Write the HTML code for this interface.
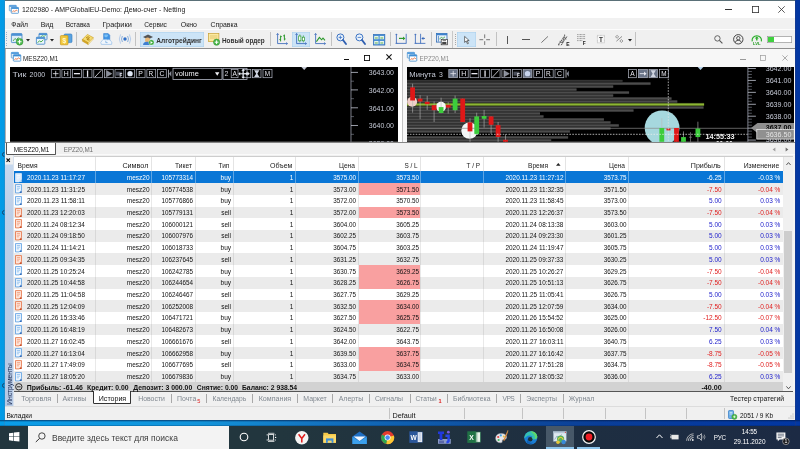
<!DOCTYPE html>
<html lang="ru"><head><meta charset="utf-8"><title>MetaTrader 5</title>
<style>
html,body{margin:0;padding:0}
body{width:800px;height:449px;overflow:hidden;position:relative;background:#fff;font-family:"Liberation Sans",sans-serif}
.a{position:absolute}
.t{position:absolute;white-space:nowrap;margin:0;padding:0}
svg{overflow:visible}
svg text{font-family:"Liberation Sans",sans-serif}
#root{position:absolute;left:-4px;top:-4px;width:808px;height:457px;overflow:hidden;filter:blur(0.35px);background:linear-gradient(90deg,#0a9de8 0%,#1294da 25%,#1478c4 37.5%,#1060b0 50%,#0e4c9c 62.5%,#0a3e98 75%,#0236a2 100%)}
#in{position:absolute;left:4px;top:4px;width:800px;height:449px}
</style></head><body><div id="root"><div id="in">
<div class="a" style="left:0px;top:0px;width:800px;height:449px;background:linear-gradient(90deg,#0a9de8 0%,#1294da 25%,#1478c4 37.5%,#1060b0 50%,#0e4c9c 62.5%,#0a3e98 75%,#0236a2 100%);"></div>
<div class="a" style="left:0px;top:0px;width:5px;height:426px;background:linear-gradient(90deg,#029ce8 0%,#049ae4 70%,#2a8cc8 100%);"></div>
<div class="a" style="left:795.4px;top:0px;width:4.6px;height:426px;background:linear-gradient(90deg,#1a3a88 0%,#0438a2 25%,#0236a2 100%);"></div>
<div class="a" style="left:5px;top:0.6px;width:790.4px;height:419.7px;background:#fff;"></div>
<div class="a" style="left:5px;top:0px;width:790.4px;height:0.8px;background:#5a7078;"></div>
<div class="a" style="left:0px;top:420.3px;width:800px;height:1.9px;background:linear-gradient(180deg,rgba(0,25,70,.7),rgba(0,25,70,0));"></div>
<svg class="a" style="left:9.2px;top:5.4px;" width="9.8" height="8.6" viewBox="0 0 9.8 8.6"><rect x="0.3" y="0.3" width="7" height="5.6" rx="0.6" fill="#e4f1fb" stroke="#3a86c8" stroke-width="0.6"/><rect x="0.3" y="0.3" width="7" height="1.5" fill="#4a98dc"/><rect x="2.3" y="2.4" width="7.2" height="5.9" rx="0.6" fill="#fff" stroke="#2f80c6" stroke-width="0.7"/><rect x="2.3" y="2.4" width="7.2" height="1.5" fill="#3d8fd6"/><path d="M3.3 6.9 L4.8 5.8 L5.8 6.5 L7.2 5.2 L8.5 5.9" fill="none" stroke="#e0602a" stroke-width="0.8"/></svg>
<div class="t" style="top:5.25px;height:9px;line-height:9px;font-size:6.93px;color:#1a1a1a;left:22px;">1202980 - AMPGlobalEU-Demo: Демо-счет - Netting</div>
<div class="a" style="left:724.5px;top:9.4px;width:7px;height:0.7px;background:#333;"></div>
<svg class="a" style="left:751.5px;top:5.6px;" width="7" height="7" viewBox="0 0 7 7"><rect x="0.4" y="0.4" width="6.2" height="6.2" fill="none" stroke="#333" stroke-width="0.8"/></svg>
<svg class="a" style="left:778.2px;top:5.6px;" width="7" height="7" viewBox="0 0 7 7"><path d="M0.3 0.3 L6.7 6.7 M6.7 0.3 L0.3 6.7" stroke="#333" stroke-width="0.8" fill="none"/></svg>
<div class="a" style="left:5px;top:17.8px;width:790.4px;height:12.2px;background:#f1f1f1;"></div>
<div class="t" style="top:20.25px;height:9px;line-height:9px;font-size:6.81px;color:#1a1a1a;left:11.25px;">Файл</div>
<div class="t" style="top:20.25px;height:9px;line-height:9px;font-size:6.91px;color:#1a1a1a;left:40.75px;">Вид</div>
<div class="t" style="top:20.25px;height:9px;line-height:9px;font-size:6.52px;color:#1a1a1a;left:65.75px;">Вставка</div>
<div class="t" style="top:19.25px;height:11px;line-height:11px;font-size:7.36px;color:#1a1a1a;left:102.5px;">Графики</div>
<div class="t" style="top:20.25px;height:9px;line-height:9px;font-size:6.64px;color:#1a1a1a;left:144.25px;">Сервис</div>
<div class="t" style="top:20.25px;height:9px;line-height:9px;font-size:6.99px;color:#1a1a1a;left:180.75px;">Окно</div>
<div class="t" style="top:20.25px;height:9px;line-height:9px;font-size:6.88px;color:#1a1a1a;left:210.5px;">Справка</div>
<div class="a" style="left:5px;top:29.6px;width:790.4px;height:18.6px;background:#f0f0f0;"></div>
<div class="a" style="left:5px;top:29.3px;width:790.4px;height:0.7px;background:#fcfcfc;"></div>
<div class="a" style="left:5px;top:48.1px;width:790.4px;height:1.1px;background:#8e8e8e;"></div>
<div class="a" style="left:76.1px;top:32.2px;width:0.8px;height:14px;background:#c2c2c2;"></div>
<div class="a" style="left:135.3px;top:32.2px;width:0.8px;height:14px;background:#c2c2c2;"></div>
<div class="a" style="left:270.1px;top:32.2px;width:0.8px;height:14px;background:#c2c2c2;"></div>
<div class="a" style="left:330.6px;top:32.2px;width:0.8px;height:14px;background:#c2c2c2;"></div>
<div class="a" style="left:390.1px;top:32.2px;width:0.8px;height:14px;background:#c2c2c2;"></div>
<div class="a" style="left:430.6px;top:32.2px;width:0.8px;height:14px;background:#c2c2c2;"></div>
<div class="a" style="left:495.9px;top:32.2px;width:0.8px;height:14px;background:#c2c2c2;"></div>
<div class="a" style="left:635.2px;top:32.2px;width:0.8px;height:14px;background:#c2c2c2;"></div>
<div class="a" style="left:452.2px;top:31px;width:0.6px;height:16.5px;background:#c8c8c8;"></div>
<div class="a" style="left:455px;top:33.5px;width:1px;height:0.9px;background:#a8a8a8;"></div>
<div class="a" style="left:455px;top:35.6px;width:1px;height:0.9px;background:#a8a8a8;"></div>
<div class="a" style="left:455px;top:37.7px;width:1px;height:0.9px;background:#a8a8a8;"></div>
<div class="a" style="left:455px;top:39.8px;width:1px;height:0.9px;background:#a8a8a8;"></div>
<div class="a" style="left:455px;top:41.9px;width:1px;height:0.9px;background:#a8a8a8;"></div>
<div class="a" style="left:455px;top:44px;width:1px;height:0.9px;background:#a8a8a8;"></div>
<div class="a" style="left:5.9px;top:32px;width:0.8px;height:0.9px;background:#9ab0cc;"></div>
<div class="a" style="left:5.9px;top:34.1px;width:0.8px;height:0.9px;background:#9ab0cc;"></div>
<div class="a" style="left:5.9px;top:36.2px;width:0.8px;height:0.9px;background:#9ab0cc;"></div>
<div class="a" style="left:5.9px;top:38.3px;width:0.8px;height:0.9px;background:#9ab0cc;"></div>
<div class="a" style="left:5.9px;top:40.4px;width:0.8px;height:0.9px;background:#9ab0cc;"></div>
<div class="a" style="left:5.9px;top:42.5px;width:0.8px;height:0.9px;background:#9ab0cc;"></div>
<div class="a" style="left:5.9px;top:44.6px;width:0.8px;height:0.9px;background:#9ab0cc;"></div>
<svg class="a" style="left:11.4px;top:33.2px;" width="12.4" height="12.4" viewBox="0 0 12.4 12.4"><rect x="0.4" y="0.6" width="10.6" height="9" rx="0.8" fill="#dcecf8" stroke="#3b82c4" stroke-width="0.8"/><rect x="0.4" y="0.6" width="10.6" height="2.2" fill="#4a90d4"/><path d="M2 8 L4 5.5 L5.5 6.8 L7.5 4.4" stroke="#3a9a3a" stroke-width="0.8" fill="none"/><circle cx="8.6" cy="8.8" r="3.4" fill="#4cb84c" stroke="#2a8a2a" stroke-width="0.5"/><path d="M8.6 6.8 V10.8 M6.6 8.8 H10.6" stroke="#fff" stroke-width="1.1"/></svg>
<svg class="a" style="left:26.2px;top:38.8px;" width="4" height="2.4" viewBox="0 0 4 2.4"><path d="M0 0 L4 0 L2 2.4 Z" fill="#222"/></svg>
<svg class="a" style="left:36px;top:33.4px;" width="11.6" height="12" viewBox="0 0 11.6 12"><rect x="3" y="0.4" width="8" height="6.4" rx="0.6" fill="#e4f0fa" stroke="#3b82c4" stroke-width="0.8"/><rect x="3" y="0.4" width="8" height="1.6" fill="#4a90d4"/><rect x="0.4" y="4.2" width="8.4" height="7" rx="0.6" fill="#eef6fc" stroke="#3b82c4" stroke-width="0.8"/><rect x="0.4" y="4.2" width="8.4" height="1.7" fill="#4a90d4"/><path d="M1.6 9.8 L3.4 7.8 L5 9 L7.4 6.8" stroke="#3aa63a" stroke-width="0.9" fill="none"/><path d="M4.6 4 L6.4 2.6 L8 3.4 L9.8 2.2" stroke="#3aa63a" stroke-width="0.7" fill="none"/></svg>
<svg class="a" style="left:50.2px;top:38.8px;" width="4" height="2.4" viewBox="0 0 4 2.4"><path d="M0 0 L4 0 L2 2.4 Z" fill="#222"/></svg>
<svg class="a" style="left:59.5px;top:33.3px;" width="12.4" height="12.2" viewBox="0 0 12.4 12.2"><rect x="4" y="1" width="8" height="8.6" rx="1.2" fill="#5aa2e0" stroke="#2f78c0" stroke-width="0.6"/><rect x="0.4" y="2.6" width="7.6" height="9.2" rx="0.8" fill="#f2c83a" stroke="#c8961a" stroke-width="0.7"/><text x="4.2" y="10" font-size="7" font-weight="bold" fill="#fff8d0" text-anchor="middle">$</text></svg>
<svg class="a" style="left:82px;top:33.6px;" width="11.6" height="11" viewBox="0 0 11.6 11"><path d="M0.4 5.4 L5.4 0.4 L11.2 3.6 L6.2 8.8 Z" fill="#f6dc70" stroke="#c89a1c" stroke-width="0.6"/><path d="M0.4 5.4 L6.2 8.8 L6.2 10.6 L0.4 7.2 Z" fill="#d8a820" stroke="#b88a14" stroke-width="0.4"/><path d="M6.2 8.8 L11.2 3.6 L11.2 5.2 L6.2 10.6 Z" fill="#fff0b0" stroke="#c89a1c" stroke-width="0.4"/><path d="M4.2 3.6 Q6.4 2 7.4 3.6 Q6.6 5.4 4.8 5 Q5.6 6.6 7.6 5.8" stroke="#a87808" stroke-width="0.9" fill="none"/></svg>
<svg class="a" style="left:100.2px;top:32.8px;" width="12.6" height="12" viewBox="0 0 12.6 12"><path d="M3.6 0.6 H8.2 L9.8 2.2 V8 H3.6 Z" fill="#3f93e4" stroke="#2a78cc" stroke-width="0.5"/><path d="M4.4 1.4 H7.6 L8.2 3 L6 4.6 L4.4 3.6 Z" fill="#7cc0f4"/><path d="M1.4 11.4 Q-0.2 9.2 2 7.8 Q2.6 5.8 4.8 6.6 Q6.2 5.6 7.4 6.8 Q9.6 5.8 10.4 7.8 Q12.8 8.6 11.6 11.4 Z" fill="#f0f6fc" stroke="#86b6e6" stroke-width="0.6"/><path d="M5.8 7.6 V9.6 H7.6" stroke="#6aa6e0" stroke-width="0.7" fill="none"/></svg>
<svg class="a" style="left:119px;top:33.4px;" width="12" height="12" viewBox="0 0 12 12"><circle cx="6" cy="6" r="1.7" fill="#3070c8"/><path d="M3.4 3 Q1.6 6 3.4 9 M8.6 3 Q10.4 6 8.6 9" stroke="#6f9fd8" stroke-width="0.8" fill="none"/><path d="M1.6 1.4 Q-1 6 1.6 10.6 M10.4 1.4 Q13 6 10.4 10.6" stroke="#a8c4e8" stroke-width="0.8" fill="none"/></svg>
<div class="a" style="left:139.6px;top:31.5px;width:64.8px;height:15.1px;background:#cce4f7;box-shadow:inset 0 0 0 0.5px #a8cdec;"></div>
<svg class="a" style="left:142px;top:33.4px;" width="12.4" height="12.2" viewBox="0 0 12.4 12.2"><path d="M1 4 L6 1.4 L11 4 L6 6.4 Z" fill="#555"/><circle cx="5.6" cy="7" r="2.6" fill="#e8b878"/><path d="M1 12 Q1.4 8.6 5.4 8.8 Q9.4 8.6 9.8 12 Z" fill="#3f7fd0"/><circle cx="9.4" cy="9.4" r="2.7" fill="#38a838" stroke="#fff" stroke-width="0.4"/><path d="M8.5 7.9 L10.9 9.4 L8.5 10.9 Z" fill="#fff"/></svg>
<div class="t" style="top:36.25px;height:9px;line-height:9px;font-size:6.61px;color:#333;font-weight:bold;left:156.3px;">Алготрейдинг</div>
<svg class="a" style="left:208px;top:32.8px;" width="12.4" height="12.6" viewBox="0 0 12.4 12.6"><rect x="0.5" y="0.6" width="10.4" height="8" fill="#fbe9a0" stroke="#c8a030" stroke-width="0.7"/><path d="M2 3 H9.4 M2 5 H9.4" stroke="#d4b050" stroke-width="0.6"/><circle cx="8.6" cy="9.2" r="3.1" fill="#4cb84c" stroke="#2a8a2a" stroke-width="0.5"/><path d="M8.6 7.4 V11 M6.8 9.2 H10.4" stroke="#fff" stroke-width="1"/></svg>
<div class="t" style="top:36.25px;height:9px;line-height:9px;font-size:6.39px;color:#333;font-weight:bold;left:222px;">Новый ордер</div>
<svg class="a" style="left:276px;top:33.4px;" width="12" height="12.2" viewBox="0 0 12 12.2"><path d="M1.6 0.6 V10.6 H11.4" stroke="#2f62b8" stroke-width="0.8" fill="none"/><path d="M0.4 2 L1.6 0.4 L2.8 2 M10 9.4 L11.6 10.6 L10 11.8" stroke="#2f62b8" stroke-width="0.6" fill="none"/><path d="M4.6 2.6 V8.4 M3.4 6.6 H4.6 M4.6 3.6 H5.8 M8.4 1.6 V7.4 M7.2 2.8 H8.4 M8.4 6 H9.6" stroke="#2c9a2c" stroke-width="1" fill="none"/></svg>
<div class="a" style="left:292.4px;top:31.5px;width:17.6px;height:15.1px;background:#cce4f7;box-shadow:inset 0 0 0 0.5px #a8cdec;"></div>
<svg class="a" style="left:295.4px;top:33.4px;" width="12" height="12.2" viewBox="0 0 12 12.2"><path d="M1.6 0.6 V10.6 H11.4" stroke="#2f62b8" stroke-width="0.8" fill="none"/><path d="M0.4 2 L1.6 0.4 L2.8 2 M10 9.4 L11.6 10.6 L10 11.8" stroke="#2f62b8" stroke-width="0.6" fill="none"/><path d="M4.8 1.4 V9.4 M8.4 2.4 V9.4" stroke="#2c9a2c" stroke-width="0.6"/><rect x="3.7" y="3" width="2.2" height="4.8" fill="#fff" stroke="#2c9a2c" stroke-width="0.7"/><rect x="7.3" y="4.2" width="2.2" height="3.6" fill="#fff" stroke="#2c9a2c" stroke-width="0.7"/></svg>
<svg class="a" style="left:313.6px;top:33.4px;" width="12" height="12.2" viewBox="0 0 12 12.2"><path d="M1.6 0.6 V10.6 H11.4" stroke="#2f62b8" stroke-width="0.8" fill="none"/><path d="M0.4 2 L1.6 0.4 L2.8 2 M10 9.4 L11.6 10.6 L10 11.8" stroke="#2f62b8" stroke-width="0.6" fill="none"/><path d="M2.4 8.6 L5.4 4.4 L7.6 6.8 L9 5.2 L11 7.4" stroke="#2c9a2c" stroke-width="1.1" fill="none"/></svg>
<svg class="a" style="left:336px;top:33.2px;" width="11" height="12" viewBox="0 0 11 12"><circle cx="4.4" cy="4.4" r="3.5" fill="#eaf2fb" stroke="#3c74c4" stroke-width="1"/><path d="M7 7 L10 11" stroke="#2f5fb0" stroke-width="1.8" stroke-linecap="round"/><path d="M2.6 4.4 H6.2 M4.4 2.6 V6.2" stroke="#3c74c4" stroke-width="0.8"/></svg>
<svg class="a" style="left:355px;top:33.2px;" width="11" height="12" viewBox="0 0 11 12"><circle cx="4.4" cy="4.4" r="3.5" fill="#eaf2fb" stroke="#3c74c4" stroke-width="1"/><path d="M7 7 L10 11" stroke="#2f5fb0" stroke-width="1.8" stroke-linecap="round"/><path d="M2.6 4.4 H6.2" stroke="#3c74c4" stroke-width="0.8"/></svg>
<svg class="a" style="left:373px;top:33.6px;" width="12.2" height="11.4" viewBox="0 0 12.2 11.4"><rect x="0.3" y="0.3" width="11.6" height="10.8" fill="#4a90d4" stroke="#2f6ab4" stroke-width="0.6"/><rect x="1.2" y="2" width="4.3" height="3.2" fill="#e8f4e8"/><rect x="6.7" y="2" width="4.3" height="3.2" fill="#e8f4e8"/><rect x="1.2" y="7" width="4.3" height="3.2" fill="#e8f4e8"/><rect x="6.7" y="7" width="4.3" height="3.2" fill="#e8f4e8"/><path d="M2 4 H4.8 M7.4 4 H10.2 M2 9 H4.8 M7.4 9 H10.2" stroke="#38a038" stroke-width="0.8"/></svg>
<svg class="a" style="left:395.4px;top:33.4px;" width="12.2" height="12.2" viewBox="0 0 12.2 12.2"><path d="M1.4 0.8 V10.4 H11.4" stroke="#2f62b8" stroke-width="0.8" fill="none"/><path d="M11.2 0.8 V10.4" stroke="#2f62b8" stroke-width="0.8"/><path d="M0.4 1.6 H2.4 M0.4 10.4 H2.4" stroke="#2f62b8" stroke-width="0.6"/><path d="M4 5.4 H8.4" stroke="#2c9a2c" stroke-width="1.2"/><path d="M8 3.6 L10.4 5.4 L8 7.2 Z" fill="#2c9a2c"/></svg>
<svg class="a" style="left:413.6px;top:33.4px;" width="12.4" height="12.2" viewBox="0 0 12.4 12.2"><path d="M1.4 0.8 V10.4 H11.4" stroke="#2f62b8" stroke-width="0.8" fill="none"/><path d="M6.6 0.8 V10.4" stroke="#2f62b8" stroke-width="0.8"/><path d="M0.4 1.6 H2.4 M0.4 10.4 H2.4" stroke="#2f62b8" stroke-width="0.6"/><path d="M11 5.4 H9" stroke="#2f62b8" stroke-width="0.9"/><path d="M9.4 3.8 L7.4 5.4 L9.4 7 Z" fill="#2f62b8"/></svg>
<svg class="a" style="left:436px;top:33.2px;" width="12" height="12.4" viewBox="0 0 12 12.4"><rect x="0.4" y="0.5" width="10.6" height="8.6" fill="#e8f2fb" stroke="#2f6ab4" stroke-width="0.8"/><rect x="0.4" y="0.5" width="10.6" height="1.8" fill="#3d82cc"/><path d="M2.4 3 V8.6" stroke="#2f6ab4" stroke-width="0.7"/><path d="M3.4 6 L5.4 4.4 L7 5.4 L9 3.8" stroke="#38a038" stroke-width="0.8" fill="none"/><rect x="5.2" y="6.4" width="6.2" height="5.4" fill="#fff" stroke="#333" stroke-width="0.7"/><rect x="6.2" y="9" width="4.2" height="2.2" fill="#444"/><rect x="6.6" y="6.8" width="3.4" height="1.4" fill="#888"/></svg>
<div class="a" style="left:457.4px;top:31.5px;width:18.4px;height:15.1px;background:#cce4f7;box-shadow:inset 0 0 0 0.5px #a8cdec;"></div>
<svg class="a" style="left:463.6px;top:35.6px;" width="6" height="8.4" viewBox="0 0 6 8.4"><path d="M0.6 0.4 L0.6 6.4 L2.2 5 L3.4 7.8 L4.4 7.4 L3.2 4.6 L5.2 4.6 Z" fill="#fff" stroke="#222" stroke-width="0.6"/></svg>
<svg class="a" style="left:479.4px;top:33.8px;" width="11.4" height="11.4" viewBox="0 0 11.4 11.4"><path d="M5.7 0.4 V4.2 M5.7 7.2 V11 M0.4 5.7 H4.2 M7.2 5.7 H11" stroke="#555" stroke-width="0.8"/></svg>
<div class="a" style="left:507px;top:35.6px;width:0.7px;height:8px;background:#555;"></div>
<div class="a" style="left:522px;top:39.3px;width:7.6px;height:0.7px;background:#555;"></div>
<svg class="a" style="left:541px;top:36.2px;" width="7.4" height="7" viewBox="0 0 7.4 7"><path d="M0.4 6.6 L7 0.4" stroke="#555" stroke-width="0.8"/></svg>
<svg class="a" style="left:558px;top:33.6px;" width="12" height="12" viewBox="0 0 12 12"><path d="M0.6 10.8 L6.6 1.6 M3.2 11.2 L9.2 2" stroke="#3a3a3a" stroke-width="0.9" stroke-dasharray="1.5 0.6"/><path d="M1.6 7.4 L4.4 8.8 L6.2 3.4 L8.4 5" stroke="#3a3a3a" stroke-width="0.7" fill="none"/><path d="M6.6 0.4 V2.6 M0.8 9.4 V11.6" stroke="#3a3a3a" stroke-width="0.6"/><text x="9.8" y="11.6" font-size="5" font-weight="bold" fill="#111" text-anchor="middle">E</text></svg>
<svg class="a" style="left:577.4px;top:34.2px;" width="9.4" height="11.4" viewBox="0 0 9.4 11.4"><path d="M0.2 0.6 H8.4 M0.2 2.6 H8.4 M0.2 4.6 H8.4 M0.2 6.6 H5.4" stroke="#666" stroke-width="0.7" stroke-dasharray="0.9 0.5"/><text x="7.2" y="11" font-size="4.8" font-weight="bold" fill="#222" text-anchor="middle">F</text></svg>
<svg class="a" style="left:597px;top:35.4px;" width="8" height="8.4" viewBox="0 0 8 8.4"><rect x="0.4" y="0.4" width="7" height="7.4" fill="#f8f8f8" stroke="#888" stroke-width="0.5" stroke-dasharray="0.8 0.5"/><text x="3.9" y="6.6" font-size="6.4" font-weight="bold" fill="#333" text-anchor="middle" font-family="Liberation Serif,serif">T</text></svg>
<svg class="a" style="left:615px;top:35px;" width="9" height="8" viewBox="0 0 9 8"><path d="M0.5 1.8 L2.1 0.4 L3.7 1.8 L2.1 3.2 Z" fill="none" stroke="#666" stroke-width="0.6"/><path d="M1.4 6.2 L7 1.4" stroke="#666" stroke-width="0.7"/><path d="M4.8 6 L6.4 4.6 L8 6 L6.4 7.4 Z" fill="none" stroke="#666" stroke-width="0.6"/></svg>
<svg class="a" style="left:628.3px;top:39.4px;" width="4" height="2.4" viewBox="0 0 4 2.4"><path d="M0 0 L4 0 L2 2.4 Z" fill="#222"/></svg>
<svg class="a" style="left:714.4px;top:35.2px;" width="9" height="9" viewBox="0 0 9 9"><circle cx="3.4" cy="3.4" r="2.7" fill="none" stroke="#555" stroke-width="0.9"/><path d="M5.4 5.4 L8.4 8.4" stroke="#555" stroke-width="1.1"/></svg>
<svg class="a" style="left:732.8px;top:34.2px;" width="10.6" height="10.6" viewBox="0 0 10.6 10.6"><circle cx="5.3" cy="5.3" r="4.7" fill="none" stroke="#333" stroke-width="0.9"/><circle cx="5.3" cy="4.2" r="1.7" fill="none" stroke="#333" stroke-width="0.8"/><path d="M2.2 8.6 Q2.6 6.2 5.3 6.3 Q8 6.2 8.4 8.6" fill="none" stroke="#333" stroke-width="0.8"/></svg>
<svg class="a" style="left:751px;top:33.6px;" width="11.6" height="11.6" viewBox="0 0 11.6 11.6"><path d="M1.2 7.4 A4.7 4.7 0 1 1 10.4 7.4" fill="none" stroke="#2cae2c" stroke-width="1.2"/><path d="M5.8 2.2 L7.8 4.6 L6.5 4.6 L6.5 6.6 L5.1 6.6 L5.1 4.6 L3.8 4.6 Z" fill="#2cae2c"/><text x="5.8" y="11.2" font-size="4.2" font-weight="bold" fill="#1f9a1f" text-anchor="middle">LVL</text></svg>
<div class="a" style="left:767px;top:36.4px;width:25px;height:7px;background:#fff;box-shadow:inset 0 0 0 0.7px #9a9a9a;"></div>
<div class="a" style="left:768px;top:37.4px;width:6px;height:5px;background:#3fd13f;"></div>
<div class="a" style="left:5px;top:49.2px;width:397.4px;height:92.8px;background:#fff;"></div>
<div class="a" style="left:402.4px;top:49.2px;width:393px;height:92.8px;background:#f7f7f7;"></div>
<div class="a" style="left:402.3px;top:49.2px;width:0.8px;height:92.8px;background:#c4c4c4;"></div>
<div class="a" style="left:5px;top:49.2px;width:1.3px;height:92.8px;background:#b2b2b2;"></div>
<div class="a" style="left:5px;top:141.6px;width:790.4px;height:0.8px;background:#fff;"></div>
<div class="a" style="left:5px;top:142.3px;width:790.4px;height:1.1px;background:#858585;"></div>
<svg class="a" style="left:11px;top:52.4px;" width="10.2" height="9.6" viewBox="0 0 9.6 9"><rect x="0.3" y="0.3" width="6.8" height="5.4" rx="0.6" fill="#e4f1fb" stroke="#3a86c8" stroke-width="0.6"/><rect x="0.3" y="0.3" width="6.8" height="1.5" fill="#4a98dc"/><rect x="2.2" y="2.6" width="7" height="6" rx="0.6" fill="#fff" stroke="#2f80c6" stroke-width="0.7"/><rect x="2.2" y="2.6" width="7" height="1.5" fill="#3d8fd6"/><path d="M3.2 7.2 L4.6 6.2 L5.6 6.9 L7 5.6 L8.3 6.3" fill="none" stroke="#e0602a" stroke-width="0.8"/></svg>
<div class="t" style="top:54.25px;height:9px;line-height:9px;font-size:6.34px;color:#1a1a1a;left:23px;">MESZ20,M1</div>
<svg class="a" style="left:407.4px;top:52.4px;" width="10.2" height="9.6" viewBox="0 0 9.6 9"><rect x="0.3" y="0.3" width="6.8" height="5.4" rx="0.6" fill="#e4f1fb" stroke="#3a86c8" stroke-width="0.6"/><rect x="0.3" y="0.3" width="6.8" height="1.5" fill="#4a98dc"/><rect x="2.2" y="2.6" width="7" height="6" rx="0.6" fill="#fff" stroke="#2f80c6" stroke-width="0.7"/><rect x="2.2" y="2.6" width="7" height="1.5" fill="#3d8fd6"/><path d="M3.2 7.2 L4.6 6.2 L5.6 6.9 L7 5.6 L8.3 6.3" fill="none" stroke="#e0602a" stroke-width="0.8"/></svg>
<div class="t" style="top:54.25px;height:9px;line-height:9px;font-size:6.3px;color:#8a8a8a;left:419.5px;">EPZ20,M1</div>
<div class="a" style="left:343.6px;top:59.2px;width:5.4px;height:1px;background:#111;"></div>
<svg class="a" style="left:364.2px;top:54.6px;" width="6" height="6" viewBox="0 0 6 6"><rect x="0.45" y="0.45" width="5.1" height="5.1" fill="none" stroke="#111" stroke-width="0.9"/></svg>
<svg class="a" style="left:385.6px;top:54.4px;" width="6" height="6" viewBox="0 0 6 6"><path d="M0.4 0.4 L5.6 5.6 M5.6 0.4 L0.4 5.6" stroke="#111" stroke-width="1.1"/></svg>
<div class="a" style="left:740px;top:59.4px;width:5.6px;height:0.7px;background:#9a9a9a;"></div>
<svg class="a" style="left:760.4px;top:54.8px;" width="6" height="6" viewBox="0 0 6 6"><rect x="0.4" y="0.4" width="5.2" height="5.2" fill="none" stroke="#9a9a9a" stroke-width="0.7"/></svg>
<svg class="a" style="left:782px;top:54.6px;" width="6" height="6" viewBox="0 0 6 6"><path d="M0.4 0.4 L5.6 5.6 M5.6 0.4 L0.4 5.6" stroke="#9a9a9a" stroke-width="0.8"/></svg>
<svg class="a" style="left:10px;top:66.8px;overflow:hidden" width="388" height="74.8" viewBox="0 0 388 74.8"><rect x="0" y="0" width="388" height="74.8" fill="#000"/><text x="2.5" y="9.7" font-size="6.9" fill="#c4c8d4" textLength="14" lengthAdjust="spacingAndGlyphs">Тик</text><text x="19.6" y="9.7" font-size="6.9" fill="#c4c8d4" textLength="15.6" lengthAdjust="spacingAndGlyphs">2000</text><rect x="41.3" y="2.6" width="8.8" height="8.1" fill="none" stroke="#b4b8c6" stroke-width="0.7"/><path d="M42.9 6.65 H48.5 M45.7 3.85 V9.45" stroke="#e8e8f0" stroke-width="0.8"/><rect x="51.92" y="2.6" width="8.8" height="8.1" fill="none" stroke="#b4b8c6" stroke-width="0.7"/><text x="56.32" y="9.18" font-size="6.9" fill="#e8e8f0" text-anchor="middle">H</text><rect x="62.54" y="2.6" width="8.8" height="8.1" fill="none" stroke="#b4b8c6" stroke-width="0.7"/><path d="M63.94 6.65 H69.94" stroke="#e8e8f0" stroke-width="1.3"/><rect x="73.16" y="2.6" width="8.8" height="8.1" fill="none" stroke="#b4b8c6" stroke-width="0.7"/><path d="M77.56 3.45 V9.85" stroke="#e8e8f0" stroke-width="1.3"/><rect x="83.78" y="2.6" width="8.8" height="8.1" fill="none" stroke="#b4b8c6" stroke-width="0.7"/><path d="M84.98 10.05 L91.38 3.25" stroke="#e8e8f0" stroke-width="0.8"/><rect x="94.4" y="2.6" width="8.8" height="8.1" fill="none" stroke="#b4b8c6" stroke-width="0.7"/><path d="M96.4 3.45 V9.85 L101.8 6.65 Z" fill="#8a8f9c" stroke="#c8c8d0" stroke-width="0.4"/><rect x="105.02" y="2.6" width="8.8" height="8.1" fill="none" stroke="#b4b8c6" stroke-width="0.7"/><rect x="106.02" y="4.65" width="5.8" height="4" fill="#4a4e5a"/><text x="111.02" y="10.05" font-size="4.6" font-weight="bold" fill="#e8e8f0" text-anchor="middle">F</text><rect x="115.64" y="2.6" width="8.8" height="8.1" fill="none" stroke="#b4b8c6" stroke-width="0.7"/><circle cx="120.04" cy="6.65" r="2.7" fill="#dfe6f4"/><rect x="126.26" y="2.6" width="8.8" height="8.1" fill="none" stroke="#b4b8c6" stroke-width="0.7"/><text x="130.66" y="9.18" font-size="6.9" fill="#e8e8f0" text-anchor="middle">P</text><rect x="136.88" y="2.6" width="8.8" height="8.1" fill="none" stroke="#b4b8c6" stroke-width="0.7"/><text x="140.88" y="9" font-size="6.4" fill="#e8e8f0" text-anchor="middle">R</text><path d="M141.88 7.85 l1.6 1.8" stroke="#e8e8f0" stroke-width="0.5"/><rect x="147.5" y="2.6" width="8.8" height="8.1" fill="none" stroke="#b4b8c6" stroke-width="0.7"/><text x="151.9" y="9.18" font-size="6.9" fill="#e8e8f0" text-anchor="middle">C</text><path d="M158.52 2.65 V10.65" stroke="#d0d0d8" stroke-width="0.8"/><path d="M161.32 3.65 L159.02 6.65 L161.32 9.65 Z" fill="#8a8f9c"/><rect x="163" y="1.3" width="49" height="11.2" fill="#000" stroke="#b4b8c6" stroke-width="0.8"/><text x="165" y="9.4" font-size="7.4" fill="#f0f0f4">volume</text><path d="M205 5.2 h4.4 l-2.2 3.6 Z" fill="#f0f0f4"/><rect x="213" y="1.3" width="24" height="11.2" fill="none" stroke="#b4b8c6" stroke-width="0.8"/><text x="214.6" y="9.4" font-size="7" fill="#d8d8e0">2</text><rect x="221.2" y="2.6" width="6.8" height="8.1" fill="none" stroke="#b4b8c6" stroke-width="0.7"/><text x="224.6" y="9.08" font-size="6.6" fill="#e8e8f0" text-anchor="middle">A</text><rect x="233" y="2.6" width="7.8" height="8.1" fill="none" stroke="#b4b8c6" stroke-width="0.7"/><path d="M234.2 6.65 H238.2" stroke="#e8e8f0" stroke-width="0.9"/><path d="M237.4 4.45 L239.8 6.65 L237.4 8.85 Z" fill="#e8e8f0"/><rect x="242.5" y="2.6" width="8.5" height="8.1" fill="none" stroke="#b4b8c6" stroke-width="0.7"/><path d="M244.1 3.25 H249.4 L247.35 6.65 L249.4 10.05 H244.1 L246.15 6.65 Z" fill="#cfd4e0"/><rect x="253" y="2.6" width="9" height="8.1" fill="none" stroke="#b4b8c6" stroke-width="0.7"/><text x="257.5" y="9" font-size="6.4" fill="#e8e8f0" text-anchor="middle">M</text><path d="M233.2 3 v7.6 M229.4 6.8 h7.6" stroke="#e8ecf4" stroke-width="1"/><path d="M233.2 1.8 l1.8 2 h-3.6 Z M233.2 11.8 l1.8 -2 h-3.6 Z M228.2 6.8 l2 -1.8 v3.6 Z M238.2 6.8 l-2 -1.8 v3.6 Z" fill="#e8ecf4"/><path d="M291.4 0 h5.6 l-2.8 3 Z" fill="#c8ccd8"/><path d="M341 0 V74.8" stroke="#9a9eac" stroke-width="0.8"/><path d="M341 5.4 h7" stroke="#c0c4d0" stroke-width="0.8"/><path d="M341 14.2 h3" stroke="#8a8e9c" stroke-width="0.6"/><text x="358.8" y="8.28" font-size="8" fill="#c4c8d4" textLength="25.2" lengthAdjust="spacingAndGlyphs">3643.00</text><path d="M341 22.9 h7" stroke="#c0c4d0" stroke-width="0.8"/><path d="M341 31.7 h3" stroke="#8a8e9c" stroke-width="0.6"/><text x="358.8" y="25.78" font-size="8" fill="#c4c8d4" textLength="25.2" lengthAdjust="spacingAndGlyphs">3642.00</text><path d="M341 40.8 h7" stroke="#c0c4d0" stroke-width="0.8"/><path d="M341 49.6 h3" stroke="#8a8e9c" stroke-width="0.6"/><text x="358.8" y="43.68" font-size="8" fill="#c4c8d4" textLength="25.2" lengthAdjust="spacingAndGlyphs">3641.00</text><path d="M341 58.5 h7" stroke="#c0c4d0" stroke-width="0.8"/><path d="M341 67.3 h3" stroke="#8a8e9c" stroke-width="0.6"/><text x="358.8" y="61.38" font-size="8" fill="#c4c8d4" textLength="25.2" lengthAdjust="spacingAndGlyphs">3640.00</text><path d="M341 76 h7" stroke="#c0c4d0" stroke-width="0.8"/><text x="358.8" y="78.88" font-size="8" fill="#c4c8d4" textLength="25.2" lengthAdjust="spacingAndGlyphs">3639.00</text></svg>
<svg class="a" style="left:406.5px;top:66.8px;overflow:hidden" width="387.9" height="74.8" viewBox="0 0 387.9 74.8"><rect x="0" y="0" width="387.9" height="74.8" fill="#000"/><rect x="0" y="12.11" width="215.5" height="2.99" fill="#1c1c1c"/><rect x="0" y="15.09" width="243.5" height="2.99" fill="#1c1c1c"/><rect x="0" y="18.09" width="206.2" height="2.99" fill="#1c1c1c"/><rect x="0" y="21.08" width="169.5" height="2.99" fill="#1c1c1c"/><rect x="0" y="24.07" width="222.1" height="2.99" fill="#1c1c1c"/><rect x="0" y="27.06" width="206.2" height="2.99" fill="#1c1c1c"/><rect x="0" y="30.05" width="264.5" height="2.99" fill="#1c1c1c"/><rect x="0" y="33.04" width="270.3" height="2.99" fill="#1c1c1c"/><rect x="0" y="39.02" width="296.5" height="2.99" fill="#1c1c1c"/><rect x="0" y="42.01" width="226.5" height="2.99" fill="#1c1c1c"/><rect x="0" y="45" width="133" height="2.99" fill="#1c1c1c"/><rect x="0" y="47.98" width="136.5" height="2.99" fill="#1c1c1c"/><rect x="0" y="50.98" width="196.9" height="2.99" fill="#1c1c1c"/><rect x="0" y="53.97" width="203.5" height="2.99" fill="#1c1c1c"/><rect x="0" y="56.95" width="211.8" height="2.99" fill="#1c1c1c"/><rect x="0" y="59.95" width="203.5" height="2.99" fill="#1c1c1c"/><rect x="0" y="62.94" width="162.9" height="2.99" fill="#1c1c1c"/><rect x="0" y="68.92" width="161.1" height="2.99" fill="#1c1c1c"/><rect x="0" y="71.91" width="144.2" height="2.99" fill="#1c1c1c"/><rect x="0" y="12.55" width="215.5" height="2.1" fill="#343434"/><rect x="0" y="15.54" width="243.5" height="2.1" fill="#4c4c4c"/><rect x="0" y="18.53" width="206.2" height="2.1" fill="#4c4c4c"/><rect x="0" y="21.52" width="169.5" height="2.1" fill="#4c4c4c"/><rect x="0" y="24.51" width="222.1" height="2.1" fill="#4c4c4c"/><rect x="0" y="27.5" width="206.2" height="2.1" fill="#4c4c4c"/><rect x="0" y="30.49" width="264.5" height="2.1" fill="#4c4c4c"/><rect x="0" y="33.48" width="270.3" height="2.1" fill="#4c4c4c"/><rect x="0" y="39.46" width="296.5" height="2.1" fill="#4c4c4c"/><rect x="0" y="42.45" width="226.5" height="2.1" fill="#4c4c4c"/><rect x="0" y="45.44" width="133" height="2.1" fill="#4c4c4c"/><rect x="0" y="48.43" width="136.5" height="2.1" fill="#4c4c4c"/><rect x="0" y="51.42" width="196.9" height="2.1" fill="#4c4c4c"/><rect x="0" y="54.41" width="203.5" height="2.1" fill="#4c4c4c"/><rect x="0" y="57.4" width="211.8" height="2.1" fill="#4c4c4c"/><rect x="0" y="60.39" width="203.5" height="2.1" fill="#4c4c4c"/><rect x="0" y="63.38" width="162.9" height="2.1" fill="#4c4c4c"/><rect x="0" y="69.36" width="161.1" height="2.1" fill="#4c4c4c"/><rect x="0" y="72.35" width="144.2" height="2.1" fill="#4c4c4c"/><rect x="0" y="35.92" width="297.1" height="3.2" fill="#3c4a18"/><rect x="0" y="36.52" width="297.1" height="1.9" fill="#8cb634"/><circle cx="255.1" cy="60.8" r="17.4" fill="#a6d8de"/><circle cx="62.5" cy="63.6" r="8.2" fill="#f4f8f8"/><circle cx="34" cy="39.8" r="5" fill="#f6f8f6"/><circle cx="5.1" cy="34.8" r="5" fill="#f0cfc8"/><path d="M0 61.3 H340.9" stroke="#8a8a8a" stroke-width="0.7"/><path d="M5.6 16.7 V45.7" stroke="#b8b8b8" stroke-width="0.6"/><rect x="3.2" y="20.4" width="4.8" height="13.1" fill="#e01818"/><path d="M13.1 28.2 V52.2" stroke="#b8b8b8" stroke-width="0.6"/><rect x="10.7" y="31.6" width="4.8" height="2.9" fill="#e01818"/><path d="M20.2 28.8 V42.9" stroke="#b8b8b8" stroke-width="0.6"/><rect x="17.8" y="34.8" width="4.8" height="2.4" fill="#e01818"/><path d="M27.1 34.5 V55" stroke="#b8b8b8" stroke-width="0.6"/><rect x="24.7" y="38.2" width="4.8" height="5" fill="#e01818"/><path d="M34.1 30.7 V46.2" stroke="#b8b8b8" stroke-width="0.6"/><rect x="31.7" y="40.1" width="4.8" height="5.9" fill="#3ccc3c"/><path d="M41.2 35.2 V46.6" stroke="#b8b8b8" stroke-width="0.6"/><rect x="38.8" y="37.8" width="4.8" height="2.8" fill="#e01818"/><path d="M48.1 28.5 V46" stroke="#b8b8b8" stroke-width="0.6"/><rect x="45.7" y="31.6" width="4.8" height="11.6" fill="#3ccc3c"/><path d="M55.7 31.6 V55" stroke="#b8b8b8" stroke-width="0.6"/><rect x="53.3" y="31.6" width="4.8" height="23.4" fill="#e01818"/><path d="M63 51.2 V74.8" stroke="#b8b8b8" stroke-width="0.6"/><rect x="60.6" y="55.4" width="4.8" height="9" fill="#e01818"/><path d="M69.7 45.7 V67.2" stroke="#b8b8b8" stroke-width="0.6"/><rect x="67.3" y="49.4" width="4.8" height="17.8" fill="#3ccc3c"/><path d="M77.1 42.9 V60.6" stroke="#b8b8b8" stroke-width="0.6"/><rect x="74.7" y="49" width="4.8" height="2.8" fill="#3ccc3c"/><path d="M84.1 49.2 V67.2" stroke="#b8b8b8" stroke-width="0.6"/><rect x="81.7" y="49.4" width="4.8" height="8.4" fill="#e01818"/><path d="M91.1 55 V74.8" stroke="#b8b8b8" stroke-width="0.6"/><rect x="88.7" y="58.2" width="4.8" height="11.8" fill="#e01818"/><path d="M98.5 67.2 V74.8" stroke="#b8b8b8" stroke-width="0.6"/><rect x="96.1" y="72.8" width="4.8" height="2" fill="#e01818"/><path d="M254.8 51.2 V74.8" stroke="#b8b8b8" stroke-width="0.6"/><rect x="252.4" y="61" width="4.8" height="13.8" fill="#3ccc3c"/><path d="M269.5 61 V74.8" stroke="#b8b8b8" stroke-width="0.6"/><rect x="267.1" y="61" width="4.8" height="13.8" fill="#e01818"/><path d="M276.5 64.4 V74.8" stroke="#b8b8b8" stroke-width="0.6"/><rect x="274.1" y="70.1" width="4.8" height="4.7" fill="#3ccc3c"/><path d="M290.9 54.7 V74.8" stroke="#b8b8b8" stroke-width="0.6"/><rect x="288.5" y="61.6" width="4.8" height="8.5" fill="#3ccc3c"/><rect x="259.5" y="61.6" width="4" height="1.8" fill="#e01818"/><path d="M283.5 65.2 V74.8 M282 70.2 h3" stroke="#a0a0a0" stroke-width="0.6"/><path d="M0 67.3 H340.9" stroke="#f0f0f0" stroke-width="0.7" stroke-dasharray="1.6 1.3"/><path d="M261.3 0 V74.8" stroke="#e4e4e4" stroke-width="0.7" stroke-dasharray="1.6 1.3"/><rect x="0" y="0" width="220.5" height="12.8" fill="#000"/><text x="2.3" y="9.9" font-size="6.9" fill="#c4c8d4" textLength="26.4" lengthAdjust="spacingAndGlyphs">Минута</text><text x="32.1" y="9.9" font-size="6.9" fill="#c4c8d4">3</text><rect x="41.8" y="2.6" width="8.8" height="8.1" fill="#6a7488" stroke="#b4b8c6" stroke-width="0.7"/><path d="M43.4 6.65 H49 M46.2 3.85 V9.45" stroke="#e8e8f0" stroke-width="0.8"/><rect x="52.42" y="2.6" width="8.8" height="8.1" fill="none" stroke="#b4b8c6" stroke-width="0.7"/><text x="56.82" y="9.18" font-size="6.9" fill="#e8e8f0" text-anchor="middle">H</text><rect x="63.04" y="2.6" width="8.8" height="8.1" fill="none" stroke="#b4b8c6" stroke-width="0.7"/><path d="M64.44 6.65 H70.44" stroke="#e8e8f0" stroke-width="1.3"/><rect x="73.66" y="2.6" width="8.8" height="8.1" fill="none" stroke="#b4b8c6" stroke-width="0.7"/><path d="M78.06 3.45 V9.85" stroke="#e8e8f0" stroke-width="1.3"/><rect x="84.28" y="2.6" width="8.8" height="8.1" fill="none" stroke="#b4b8c6" stroke-width="0.7"/><path d="M85.48 10.05 L91.88 3.25" stroke="#e8e8f0" stroke-width="0.8"/><rect x="94.9" y="2.6" width="8.8" height="8.1" fill="none" stroke="#b4b8c6" stroke-width="0.7"/><path d="M96.9 3.45 V9.85 L102.3 6.65 Z" fill="#8a8f9c" stroke="#c8c8d0" stroke-width="0.4"/><rect x="105.52" y="2.6" width="8.8" height="8.1" fill="none" stroke="#b4b8c6" stroke-width="0.7"/><rect x="106.52" y="4.65" width="5.8" height="4" fill="#4a4e5a"/><text x="111.52" y="10.05" font-size="4.6" font-weight="bold" fill="#e8e8f0" text-anchor="middle">F</text><rect x="116.14" y="2.6" width="8.8" height="8.1" fill="#6a7488" stroke="#b4b8c6" stroke-width="0.7"/><circle cx="120.54" cy="6.65" r="2.7" fill="#c8d4ec"/><rect x="126.76" y="2.6" width="8.8" height="8.1" fill="none" stroke="#b4b8c6" stroke-width="0.7"/><text x="131.16" y="9.18" font-size="6.9" fill="#e8e8f0" text-anchor="middle">P</text><rect x="137.38" y="2.6" width="8.8" height="8.1" fill="none" stroke="#b4b8c6" stroke-width="0.7"/><text x="141.38" y="9" font-size="6.4" fill="#e8e8f0" text-anchor="middle">R</text><path d="M142.38 7.85 l1.6 1.8" stroke="#e8e8f0" stroke-width="0.5"/><rect x="148" y="2.6" width="8.8" height="8.1" fill="none" stroke="#b4b8c6" stroke-width="0.7"/><text x="152.4" y="9.18" font-size="6.9" fill="#e8e8f0" text-anchor="middle">C</text><path d="M159.02 2.65 V10.65" stroke="#d0d0d8" stroke-width="0.8"/><path d="M161.82 3.65 L159.52 6.65 L161.82 9.65 Z" fill="#8a8f9c"/><rect x="221.5" y="2.6" width="8" height="8.1" fill="none" stroke="#b4b8c6" stroke-width="0.7"/><text x="225.5" y="9.08" font-size="6.6" fill="#e8e8f0" text-anchor="middle">A</text><rect x="231.5" y="2.6" width="9" height="8.1" fill="#6a7488" stroke="#b4b8c6" stroke-width="0.7"/><path d="M232.7 6.65 H237.9" stroke="#e8e8f0" stroke-width="0.9"/><path d="M237.1 4.45 L239.5 6.65 L237.1 8.85 Z" fill="#e8e8f0"/><rect x="242" y="2.6" width="8.5" height="8.1" fill="#6a7488" stroke="#b4b8c6" stroke-width="0.7"/><path d="M243.6 3.25 H248.9 L246.85 6.65 L248.9 10.05 H243.6 L245.65 6.65 Z" fill="#cfd4e0"/><rect x="252.5" y="2.6" width="9" height="8.1" fill="none" stroke="#b4b8c6" stroke-width="0.7"/><text x="257" y="9" font-size="6.4" fill="#e8e8f0" text-anchor="middle">M</text><path d="M290.7 0 h5.6 l-2.8 3 Z" fill="#b8d4ec"/><path d="M340.9 0 V74.8" stroke="#9a9eac" stroke-width="0.8"/><path d="M340.9 1.5 h8" stroke="#c0c4d0" stroke-width="0.8"/><path d="M340.9 4.48 h4" stroke="#8a8e9c" stroke-width="0.6"/><path d="M340.9 7.46 h4" stroke="#8a8e9c" stroke-width="0.6"/><path d="M340.9 10.44 h4" stroke="#8a8e9c" stroke-width="0.6"/><text x="358.7" y="3.88" font-size="8" fill="#c4c8d4" textLength="25.8" lengthAdjust="spacingAndGlyphs">3642.00</text><path d="M340.9 13.43 h8" stroke="#c0c4d0" stroke-width="0.8"/><path d="M340.9 16.41 h4" stroke="#8a8e9c" stroke-width="0.6"/><path d="M340.9 19.39 h4" stroke="#8a8e9c" stroke-width="0.6"/><path d="M340.9 22.37 h4" stroke="#8a8e9c" stroke-width="0.6"/><text x="358.7" y="15.81" font-size="8" fill="#c4c8d4" textLength="25.8" lengthAdjust="spacingAndGlyphs">3641.00</text><path d="M340.9 25.36 h8" stroke="#c0c4d0" stroke-width="0.8"/><path d="M340.9 28.34 h4" stroke="#8a8e9c" stroke-width="0.6"/><path d="M340.9 31.32 h4" stroke="#8a8e9c" stroke-width="0.6"/><path d="M340.9 34.3 h4" stroke="#8a8e9c" stroke-width="0.6"/><text x="358.7" y="27.74" font-size="8" fill="#c4c8d4" textLength="25.8" lengthAdjust="spacingAndGlyphs">3640.00</text><path d="M340.9 37.29 h8" stroke="#c0c4d0" stroke-width="0.8"/><path d="M340.9 40.27 h4" stroke="#8a8e9c" stroke-width="0.6"/><path d="M340.9 43.25 h4" stroke="#8a8e9c" stroke-width="0.6"/><path d="M340.9 46.23 h4" stroke="#8a8e9c" stroke-width="0.6"/><text x="358.7" y="39.67" font-size="8" fill="#c4c8d4" textLength="25.8" lengthAdjust="spacingAndGlyphs">3639.00</text><path d="M340.9 49.22 h8" stroke="#c0c4d0" stroke-width="0.8"/><path d="M340.9 52.2 h4" stroke="#8a8e9c" stroke-width="0.6"/><path d="M340.9 55.18 h4" stroke="#8a8e9c" stroke-width="0.6"/><path d="M340.9 58.16 h4" stroke="#8a8e9c" stroke-width="0.6"/><text x="358.7" y="51.6" font-size="8" fill="#c4c8d4" textLength="25.8" lengthAdjust="spacingAndGlyphs">3638.00</text><path d="M340.9 61.15 h8" stroke="#c0c4d0" stroke-width="0.8"/><path d="M340.9 64.13 h4" stroke="#8a8e9c" stroke-width="0.6"/><path d="M340.9 67.11 h4" stroke="#8a8e9c" stroke-width="0.6"/><path d="M340.9 70.09 h4" stroke="#8a8e9c" stroke-width="0.6"/><path d="M340.9 73.08 h8" stroke="#c0c4d0" stroke-width="0.8"/><path d="M340.9 76.06 h4" stroke="#8a8e9c" stroke-width="0.6"/><path d="M340.9 79.04 h4" stroke="#8a8e9c" stroke-width="0.6"/><path d="M340.9 82.02 h4" stroke="#8a8e9c" stroke-width="0.6"/><text x="358.7" y="75.46" font-size="8" fill="#c4c8d4" textLength="25.8" lengthAdjust="spacingAndGlyphs">3636.00</text><path d="M344 61 L350.5 56.1 H387.9 V65.9 H350.5 Z" fill="#8e8e8e"/><text font-weight="bold" x="358.7" y="63.38" font-size="8" fill="#0a0a0a" textLength="25.8" lengthAdjust="spacingAndGlyphs">3637.00</text><rect x="349.8" y="62.6" width="37.4" height="9.5" fill="#909090" stroke="#f4f4f4" stroke-width="0.7"/><text x="358.7" y="70.28" font-size="8" fill="#e4e4e4" textLength="25.8" lengthAdjust="spacingAndGlyphs">3636.50</text><text x="298.5" y="72.2" font-size="7.6" font-weight="bold" fill="#f4f4f4" textLength="29" lengthAdjust="spacingAndGlyphs">14:55:33</text><rect x="309.5" y="74" width="2.4" height="0.9" rx="0.4" fill="#d8d8d8"/><rect x="313.1" y="74" width="2.4" height="0.9" rx="0.4" fill="#d8d8d8"/><rect x="319.1" y="74" width="2.4" height="0.9" rx="0.4" fill="#d8d8d8"/><rect x="322.7" y="74" width="2.4" height="0.9" rx="0.4" fill="#d8d8d8"/></svg>
<div class="a" style="left:5px;top:143.4px;width:790.4px;height:11.8px;background:#f0f0f0;"></div>
<div class="a" style="left:56px;top:154.4px;width:739.4px;height:0.9px;background:#fafafa;"></div>
<div class="a" style="left:5.6px;top:142.6px;width:50.7px;height:12px;background:#fff;border:0.8px solid #555;border-top:none;box-sizing:border-box;border-radius:0 0 1.5px 1.5px;"></div>
<div class="t" style="top:145.25px;height:9px;line-height:9px;font-size:6.42px;color:#111;left:13.75px;">MESZ20,M1</div>
<div class="t" style="top:145.25px;height:9px;line-height:9px;font-size:6.3px;color:#6c6c6c;left:63.75px;letter-spacing:-0.06px;">EPZ20,M1</div>
<svg class="a" style="left:772px;top:147px;" width="4" height="5" viewBox="0 0 4 5"><path d="M3.4 0.4 L0.6 2.5 L3.4 4.6 Z" fill="#a0a0a0"/></svg>
<svg class="a" style="left:785.4px;top:147px;" width="4" height="5" viewBox="0 0 4 5"><path d="M0.6 0.4 L3.4 2.5 L0.6 4.6 Z" fill="#707070"/></svg>
<div class="a" style="left:5px;top:155.2px;width:790.4px;height:251.8px;background:#f0f0f0;"></div>
<div class="a" style="left:5px;top:155.2px;width:7.8px;height:251.2px;background:linear-gradient(180deg,#f0f0f0 0px,#f0f0f0 8.5px,#c6d8ee 10.5px,#bccfe8 60px,#b6c9e4 100%);"></div>
<div class="a" style="left:12.8px;top:155.2px;width:0.8px;height:251.2px;background:#d8e2ee;"></div>
<svg class="a" style="left:6.4px;top:157.8px;" width="4.4" height="4.4" viewBox="0 0 4.4 4.4"><path d="M0.5 0.5 L3.9 3.9 M3.9 0.5 L0.5 3.9" stroke="#111" stroke-width="1.1"/></svg>
<div class="t" style="top:-3.75px;height:9px;line-height:9px;font-size:6.7px;color:#16264e;left:0px;left:9.3px;top:384px;transform:translate(-50%,-50%) rotate(-90deg);">Инструменты</div>
<div class="a" style="left:13.8px;top:157px;width:769.4px;height:14.4px;background:#fff;"></div>
<div class="a" style="left:13.8px;top:156.4px;width:778.8px;height:0.8px;background:#cdcdcd;"></div>
<div class="a" style="left:13.8px;top:171.4px;width:769.4px;height:11.71px;background:#0976d6;"></div>
<svg class="a" style="left:15.2px;top:172.5px;" width="7.2" height="9.6" viewBox="0 0 7 9.2"><path d="M0.5 0.5 H6.3 V6 L4.2 8.6 H0.5 Z" fill="#dcebfb" stroke="#e8f2ff" stroke-width="0.7" stroke-linejoin="round"/><path d="M1.8 2.4 H5 M1.8 4 H5 M1.8 5.6 H3.8" stroke="#ffffff" stroke-width="0.6"/><path d="M6.5 6.2 L4.4 8.8 L6.5 8.8 Z" fill="#cfe2f8"/></svg>
<div class="t" style="top:173.25px;height:9px;line-height:9px;font-size:6.43px;color:#fff;left:27px;">2020.11.23 11:17:27</div>
<div class="t" style="top:173.25px;height:9px;line-height:9px;font-size:6.5px;color:#fff;right:650.4px;text-align:right;">mesz20</div>
<div class="t" style="top:173.25px;height:9px;line-height:9px;font-size:6.3px;color:#fff;right:607px;text-align:right;">105773314</div>
<div class="t" style="top:173.25px;height:9px;line-height:9px;font-size:6.5px;color:#fff;right:569px;text-align:right;">buy</div>
<div class="t" style="top:173.25px;height:9px;line-height:9px;font-size:6.5px;color:#fff;right:506.6px;text-align:right;">1</div>
<div class="t" style="top:173.25px;height:9px;line-height:9px;font-size:6.3px;color:#fff;right:444px;text-align:right;">3575.00</div>
<div class="t" style="top:173.25px;height:9px;line-height:9px;font-size:6.3px;color:#fff;right:381px;text-align:right;">3573.50</div>
<div class="t" style="top:173.25px;height:9px;line-height:9px;font-size:6.45px;color:#fff;left:505.4px;">2020.11.23 11:27:12</div>
<div class="t" style="top:173.25px;height:9px;line-height:9px;font-size:6.3px;color:#fff;right:173.6px;text-align:right;">3573.75</div>
<div class="t" style="top:173.25px;height:9px;line-height:9px;font-size:6.5px;color:#fff;right:78.3px;text-align:right;">-6.25</div>
<div class="t" style="top:173.25px;height:9px;line-height:9px;font-size:6.5px;color:#fff;right:19.6px;text-align:right;">-0.03 %</div>
<div class="a" style="left:13.8px;top:183.11px;width:769.4px;height:11.71px;background:#ebebeb;"></div>
<div class="a" style="left:358.8px;top:183.11px;width:61.4px;height:11.71px;background:#f9a0a0;"></div>
<svg class="a" style="left:15.2px;top:184.21px;" width="7.2" height="9.6" viewBox="0 0 7 9.2"><path d="M0.5 0.5 H6.3 V6 L4.2 8.6 H0.5 Z" fill="#eef6fe" stroke="#4593df" stroke-width="0.7" stroke-linejoin="round"/><path d="M1.8 2.4 H5 M1.8 4 H5 M1.8 5.6 H3.8" stroke="#6aaae6" stroke-width="0.6"/><path d="M6.5 6.2 L4.4 8.8 L6.5 8.8 Z" fill="#1f5fb4"/></svg>
<div class="t" style="top:185.25px;height:9px;line-height:9px;font-size:6.43px;color:#111;left:27px;">2020.11.23 11:31:25</div>
<div class="t" style="top:185.25px;height:9px;line-height:9px;font-size:6.5px;color:#111;right:650.4px;text-align:right;">mesz20</div>
<div class="t" style="top:185.25px;height:9px;line-height:9px;font-size:6.3px;color:#111;right:607px;text-align:right;">105774538</div>
<div class="t" style="top:185.25px;height:9px;line-height:9px;font-size:6.5px;color:#111;right:569px;text-align:right;">buy</div>
<div class="t" style="top:185.25px;height:9px;line-height:9px;font-size:6.5px;color:#111;right:506.6px;text-align:right;">1</div>
<div class="t" style="top:185.25px;height:9px;line-height:9px;font-size:6.3px;color:#111;right:444px;text-align:right;">3573.00</div>
<div class="t" style="top:185.25px;height:9px;line-height:9px;font-size:6.3px;color:#111;right:381px;text-align:right;">3571.50</div>
<div class="t" style="top:185.25px;height:9px;line-height:9px;font-size:6.45px;color:#111;left:505.4px;">2020.11.23 11:32:35</div>
<div class="t" style="top:185.25px;height:9px;line-height:9px;font-size:6.3px;color:#111;right:173.6px;text-align:right;">3571.50</div>
<div class="t" style="top:185.25px;height:9px;line-height:9px;font-size:6.5px;color:#e02020;right:78.3px;text-align:right;">-7.50</div>
<div class="t" style="top:185.25px;height:9px;line-height:9px;font-size:6.5px;color:#e02020;right:19.6px;text-align:right;">-0.04 %</div>
<div class="a" style="left:13.8px;top:194.83px;width:769.4px;height:11.71px;background:#fff;"></div>
<svg class="a" style="left:15.2px;top:195.93px;" width="7.2" height="9.6" viewBox="0 0 7 9.2"><path d="M0.5 0.5 H6.3 V6 L4.2 8.6 H0.5 Z" fill="#eef6fe" stroke="#4593df" stroke-width="0.7" stroke-linejoin="round"/><path d="M1.8 2.4 H5 M1.8 4 H5 M1.8 5.6 H3.8" stroke="#6aaae6" stroke-width="0.6"/><path d="M6.5 6.2 L4.4 8.8 L6.5 8.8 Z" fill="#1f5fb4"/></svg>
<div class="t" style="top:196.25px;height:9px;line-height:9px;font-size:6.48px;color:#111;left:27px;">2020.11.23 11:58:11</div>
<div class="t" style="top:196.25px;height:9px;line-height:9px;font-size:6.5px;color:#111;right:650.4px;text-align:right;">mesz20</div>
<div class="t" style="top:196.25px;height:9px;line-height:9px;font-size:6.3px;color:#111;right:607px;text-align:right;">105776866</div>
<div class="t" style="top:196.25px;height:9px;line-height:9px;font-size:6.5px;color:#111;right:569px;text-align:right;">buy</div>
<div class="t" style="top:196.25px;height:9px;line-height:9px;font-size:6.5px;color:#111;right:506.6px;text-align:right;">1</div>
<div class="t" style="top:196.25px;height:9px;line-height:9px;font-size:6.3px;color:#111;right:444px;text-align:right;">3572.00</div>
<div class="t" style="top:196.25px;height:9px;line-height:9px;font-size:6.3px;color:#111;right:381px;text-align:right;">3570.50</div>
<div class="t" style="top:196.25px;height:9px;line-height:9px;font-size:6.45px;color:#111;left:505.4px;">2020.11.23 11:58:45</div>
<div class="t" style="top:196.25px;height:9px;line-height:9px;font-size:6.3px;color:#111;right:173.6px;text-align:right;">3573.00</div>
<div class="t" style="top:196.25px;height:9px;line-height:9px;font-size:6.5px;color:#2222cc;right:78.3px;text-align:right;">5.00</div>
<div class="t" style="top:196.25px;height:9px;line-height:9px;font-size:6.5px;color:#2222cc;right:19.6px;text-align:right;">0.03 %</div>
<div class="a" style="left:13.8px;top:206.54px;width:769.4px;height:11.71px;background:#ebebeb;"></div>
<div class="a" style="left:358.8px;top:206.54px;width:61.4px;height:11.71px;background:#f9a0a0;"></div>
<svg class="a" style="left:15.2px;top:207.64px;" width="7.2" height="9.6" viewBox="0 0 7 9.2"><path d="M0.5 0.5 H6.3 V6 L4.2 8.6 H0.5 Z" fill="#fde6dc" stroke="#e2602c" stroke-width="0.7" stroke-linejoin="round"/><path d="M1.8 2.4 H5 M1.8 4 H5 M1.8 5.6 H3.8" stroke="#ee8a5e" stroke-width="0.6"/><path d="M6.5 6.2 L4.4 8.8 L6.5 8.8 Z" fill="#c43c10"/></svg>
<div class="t" style="top:208.25px;height:9px;line-height:9px;font-size:6.37px;color:#111;left:27px;">2020.11.23 12:20:03</div>
<div class="t" style="top:208.25px;height:9px;line-height:9px;font-size:6.5px;color:#111;right:650.4px;text-align:right;">mesz20</div>
<div class="t" style="top:208.25px;height:9px;line-height:9px;font-size:6.3px;color:#111;right:607px;text-align:right;">105779131</div>
<div class="t" style="top:208.25px;height:9px;line-height:9px;font-size:6.5px;color:#111;right:569px;text-align:right;">sell</div>
<div class="t" style="top:208.25px;height:9px;line-height:9px;font-size:6.5px;color:#111;right:506.6px;text-align:right;">1</div>
<div class="t" style="top:208.25px;height:9px;line-height:9px;font-size:6.3px;color:#111;right:444px;text-align:right;">3572.00</div>
<div class="t" style="top:208.25px;height:9px;line-height:9px;font-size:6.3px;color:#111;right:381px;text-align:right;">3573.50</div>
<div class="t" style="top:208.25px;height:9px;line-height:9px;font-size:6.39px;color:#111;left:505.4px;">2020.11.23 12:26:37</div>
<div class="t" style="top:208.25px;height:9px;line-height:9px;font-size:6.3px;color:#111;right:173.6px;text-align:right;">3573.50</div>
<div class="t" style="top:208.25px;height:9px;line-height:9px;font-size:6.5px;color:#e02020;right:78.3px;text-align:right;">-7.50</div>
<div class="t" style="top:208.25px;height:9px;line-height:9px;font-size:6.5px;color:#e02020;right:19.6px;text-align:right;">-0.04 %</div>
<div class="a" style="left:13.8px;top:218.26px;width:769.4px;height:11.71px;background:#fff;"></div>
<svg class="a" style="left:15.2px;top:219.36px;" width="7.2" height="9.6" viewBox="0 0 7 9.2"><path d="M0.5 0.5 H6.3 V6 L4.2 8.6 H0.5 Z" fill="#fde6dc" stroke="#e2602c" stroke-width="0.7" stroke-linejoin="round"/><path d="M1.8 2.4 H5 M1.8 4 H5 M1.8 5.6 H3.8" stroke="#ee8a5e" stroke-width="0.6"/><path d="M6.5 6.2 L4.4 8.8 L6.5 8.8 Z" fill="#c43c10"/></svg>
<div class="t" style="top:220.25px;height:9px;line-height:9px;font-size:6.37px;color:#111;left:27px;">2020.11.24 08:12:34</div>
<div class="t" style="top:220.25px;height:9px;line-height:9px;font-size:6.5px;color:#111;right:650.4px;text-align:right;">mesz20</div>
<div class="t" style="top:220.25px;height:9px;line-height:9px;font-size:6.3px;color:#111;right:607px;text-align:right;">106000121</div>
<div class="t" style="top:220.25px;height:9px;line-height:9px;font-size:6.5px;color:#111;right:569px;text-align:right;">sell</div>
<div class="t" style="top:220.25px;height:9px;line-height:9px;font-size:6.5px;color:#111;right:506.6px;text-align:right;">1</div>
<div class="t" style="top:220.25px;height:9px;line-height:9px;font-size:6.3px;color:#111;right:444px;text-align:right;">3604.00</div>
<div class="t" style="top:220.25px;height:9px;line-height:9px;font-size:6.3px;color:#111;right:381px;text-align:right;">3605.25</div>
<div class="t" style="top:220.25px;height:9px;line-height:9px;font-size:6.39px;color:#111;left:505.4px;">2020.11.24 08:13:38</div>
<div class="t" style="top:220.25px;height:9px;line-height:9px;font-size:6.3px;color:#111;right:173.6px;text-align:right;">3603.00</div>
<div class="t" style="top:220.25px;height:9px;line-height:9px;font-size:6.5px;color:#2222cc;right:78.3px;text-align:right;">5.00</div>
<div class="t" style="top:220.25px;height:9px;line-height:9px;font-size:6.5px;color:#2222cc;right:19.6px;text-align:right;">0.03 %</div>
<div class="a" style="left:13.8px;top:229.97px;width:769.4px;height:11.71px;background:#ebebeb;"></div>
<svg class="a" style="left:15.2px;top:231.07px;" width="7.2" height="9.6" viewBox="0 0 7 9.2"><path d="M0.5 0.5 H6.3 V6 L4.2 8.6 H0.5 Z" fill="#fde6dc" stroke="#e2602c" stroke-width="0.7" stroke-linejoin="round"/><path d="M1.8 2.4 H5 M1.8 4 H5 M1.8 5.6 H3.8" stroke="#ee8a5e" stroke-width="0.6"/><path d="M6.5 6.2 L4.4 8.8 L6.5 8.8 Z" fill="#c43c10"/></svg>
<div class="t" style="top:231.25px;height:9px;line-height:9px;font-size:6.37px;color:#111;left:27px;">2020.11.24 09:18:50</div>
<div class="t" style="top:231.25px;height:9px;line-height:9px;font-size:6.5px;color:#111;right:650.4px;text-align:right;">mesz20</div>
<div class="t" style="top:231.25px;height:9px;line-height:9px;font-size:6.3px;color:#111;right:607px;text-align:right;">106007976</div>
<div class="t" style="top:231.25px;height:9px;line-height:9px;font-size:6.5px;color:#111;right:569px;text-align:right;">sell</div>
<div class="t" style="top:231.25px;height:9px;line-height:9px;font-size:6.5px;color:#111;right:506.6px;text-align:right;">1</div>
<div class="t" style="top:231.25px;height:9px;line-height:9px;font-size:6.3px;color:#111;right:444px;text-align:right;">3602.25</div>
<div class="t" style="top:231.25px;height:9px;line-height:9px;font-size:6.3px;color:#111;right:381px;text-align:right;">3603.75</div>
<div class="t" style="top:231.25px;height:9px;line-height:9px;font-size:6.39px;color:#111;left:505.4px;">2020.11.24 09:23:30</div>
<div class="t" style="top:231.25px;height:9px;line-height:9px;font-size:6.3px;color:#111;right:173.6px;text-align:right;">3601.25</div>
<div class="t" style="top:231.25px;height:9px;line-height:9px;font-size:6.5px;color:#2222cc;right:78.3px;text-align:right;">5.00</div>
<div class="t" style="top:231.25px;height:9px;line-height:9px;font-size:6.5px;color:#2222cc;right:19.6px;text-align:right;">0.03 %</div>
<div class="a" style="left:13.8px;top:241.68px;width:769.4px;height:11.71px;background:#fff;"></div>
<svg class="a" style="left:15.2px;top:242.78px;" width="7.2" height="9.6" viewBox="0 0 7 9.2"><path d="M0.5 0.5 H6.3 V6 L4.2 8.6 H0.5 Z" fill="#eef6fe" stroke="#4593df" stroke-width="0.7" stroke-linejoin="round"/><path d="M1.8 2.4 H5 M1.8 4 H5 M1.8 5.6 H3.8" stroke="#6aaae6" stroke-width="0.6"/><path d="M6.5 6.2 L4.4 8.8 L6.5 8.8 Z" fill="#1f5fb4"/></svg>
<div class="t" style="top:243.25px;height:9px;line-height:9px;font-size:6.43px;color:#111;left:27px;">2020.11.24 11:14:21</div>
<div class="t" style="top:243.25px;height:9px;line-height:9px;font-size:6.5px;color:#111;right:650.4px;text-align:right;">mesz20</div>
<div class="t" style="top:243.25px;height:9px;line-height:9px;font-size:6.3px;color:#111;right:607px;text-align:right;">106018733</div>
<div class="t" style="top:243.25px;height:9px;line-height:9px;font-size:6.5px;color:#111;right:569px;text-align:right;">buy</div>
<div class="t" style="top:243.25px;height:9px;line-height:9px;font-size:6.5px;color:#111;right:506.6px;text-align:right;">1</div>
<div class="t" style="top:243.25px;height:9px;line-height:9px;font-size:6.3px;color:#111;right:444px;text-align:right;">3604.75</div>
<div class="t" style="top:243.25px;height:9px;line-height:9px;font-size:6.3px;color:#111;right:381px;text-align:right;">3603.25</div>
<div class="t" style="top:243.25px;height:9px;line-height:9px;font-size:6.45px;color:#111;left:505.4px;">2020.11.24 11:19:47</div>
<div class="t" style="top:243.25px;height:9px;line-height:9px;font-size:6.3px;color:#111;right:173.6px;text-align:right;">3605.75</div>
<div class="t" style="top:243.25px;height:9px;line-height:9px;font-size:6.5px;color:#2222cc;right:78.3px;text-align:right;">5.00</div>
<div class="t" style="top:243.25px;height:9px;line-height:9px;font-size:6.5px;color:#2222cc;right:19.6px;text-align:right;">0.03 %</div>
<div class="a" style="left:13.8px;top:253.4px;width:769.4px;height:11.71px;background:#ebebeb;"></div>
<svg class="a" style="left:15.2px;top:254.5px;" width="7.2" height="9.6" viewBox="0 0 7 9.2"><path d="M0.5 0.5 H6.3 V6 L4.2 8.6 H0.5 Z" fill="#fde6dc" stroke="#e2602c" stroke-width="0.7" stroke-linejoin="round"/><path d="M1.8 2.4 H5 M1.8 4 H5 M1.8 5.6 H3.8" stroke="#ee8a5e" stroke-width="0.6"/><path d="M6.5 6.2 L4.4 8.8 L6.5 8.8 Z" fill="#c43c10"/></svg>
<div class="t" style="top:255.25px;height:9px;line-height:9px;font-size:6.37px;color:#111;left:27px;">2020.11.25 09:34:35</div>
<div class="t" style="top:255.25px;height:9px;line-height:9px;font-size:6.5px;color:#111;right:650.4px;text-align:right;">mesz20</div>
<div class="t" style="top:255.25px;height:9px;line-height:9px;font-size:6.3px;color:#111;right:607px;text-align:right;">106237645</div>
<div class="t" style="top:255.25px;height:9px;line-height:9px;font-size:6.5px;color:#111;right:569px;text-align:right;">sell</div>
<div class="t" style="top:255.25px;height:9px;line-height:9px;font-size:6.5px;color:#111;right:506.6px;text-align:right;">1</div>
<div class="t" style="top:255.25px;height:9px;line-height:9px;font-size:6.3px;color:#111;right:444px;text-align:right;">3631.25</div>
<div class="t" style="top:255.25px;height:9px;line-height:9px;font-size:6.3px;color:#111;right:381px;text-align:right;">3632.75</div>
<div class="t" style="top:255.25px;height:9px;line-height:9px;font-size:6.39px;color:#111;left:505.4px;">2020.11.25 09:37:33</div>
<div class="t" style="top:255.25px;height:9px;line-height:9px;font-size:6.3px;color:#111;right:173.6px;text-align:right;">3630.25</div>
<div class="t" style="top:255.25px;height:9px;line-height:9px;font-size:6.5px;color:#2222cc;right:78.3px;text-align:right;">5.00</div>
<div class="t" style="top:255.25px;height:9px;line-height:9px;font-size:6.5px;color:#2222cc;right:19.6px;text-align:right;">0.03 %</div>
<div class="a" style="left:13.8px;top:265.11px;width:769.4px;height:11.71px;background:#fff;"></div>
<div class="a" style="left:358.8px;top:265.11px;width:61.4px;height:11.71px;background:#f9a0a0;"></div>
<svg class="a" style="left:15.2px;top:266.21px;" width="7.2" height="9.6" viewBox="0 0 7 9.2"><path d="M0.5 0.5 H6.3 V6 L4.2 8.6 H0.5 Z" fill="#eef6fe" stroke="#4593df" stroke-width="0.7" stroke-linejoin="round"/><path d="M1.8 2.4 H5 M1.8 4 H5 M1.8 5.6 H3.8" stroke="#6aaae6" stroke-width="0.6"/><path d="M6.5 6.2 L4.4 8.8 L6.5 8.8 Z" fill="#1f5fb4"/></svg>
<div class="t" style="top:267.25px;height:9px;line-height:9px;font-size:6.37px;color:#111;left:27px;">2020.11.25 10:25:24</div>
<div class="t" style="top:267.25px;height:9px;line-height:9px;font-size:6.5px;color:#111;right:650.4px;text-align:right;">mesz20</div>
<div class="t" style="top:267.25px;height:9px;line-height:9px;font-size:6.3px;color:#111;right:607px;text-align:right;">106242785</div>
<div class="t" style="top:267.25px;height:9px;line-height:9px;font-size:6.5px;color:#111;right:569px;text-align:right;">buy</div>
<div class="t" style="top:267.25px;height:9px;line-height:9px;font-size:6.5px;color:#111;right:506.6px;text-align:right;">1</div>
<div class="t" style="top:267.25px;height:9px;line-height:9px;font-size:6.3px;color:#111;right:444px;text-align:right;">3630.75</div>
<div class="t" style="top:267.25px;height:9px;line-height:9px;font-size:6.3px;color:#111;right:381px;text-align:right;">3629.25</div>
<div class="t" style="top:267.25px;height:9px;line-height:9px;font-size:6.39px;color:#111;left:505.4px;">2020.11.25 10:26:27</div>
<div class="t" style="top:267.25px;height:9px;line-height:9px;font-size:6.3px;color:#111;right:173.6px;text-align:right;">3629.25</div>
<div class="t" style="top:267.25px;height:9px;line-height:9px;font-size:6.5px;color:#e02020;right:78.3px;text-align:right;">-7.50</div>
<div class="t" style="top:267.25px;height:9px;line-height:9px;font-size:6.5px;color:#e02020;right:19.6px;text-align:right;">-0.04 %</div>
<div class="a" style="left:13.8px;top:276.83px;width:769.4px;height:11.71px;background:#ebebeb;"></div>
<div class="a" style="left:358.8px;top:276.83px;width:61.4px;height:11.71px;background:#f9a0a0;"></div>
<svg class="a" style="left:15.2px;top:277.93px;" width="7.2" height="9.6" viewBox="0 0 7 9.2"><path d="M0.5 0.5 H6.3 V6 L4.2 8.6 H0.5 Z" fill="#eef6fe" stroke="#4593df" stroke-width="0.7" stroke-linejoin="round"/><path d="M1.8 2.4 H5 M1.8 4 H5 M1.8 5.6 H3.8" stroke="#6aaae6" stroke-width="0.6"/><path d="M6.5 6.2 L4.4 8.8 L6.5 8.8 Z" fill="#1f5fb4"/></svg>
<div class="t" style="top:278.25px;height:9px;line-height:9px;font-size:6.37px;color:#111;left:27px;">2020.11.25 10:44:58</div>
<div class="t" style="top:278.25px;height:9px;line-height:9px;font-size:6.5px;color:#111;right:650.4px;text-align:right;">mesz20</div>
<div class="t" style="top:278.25px;height:9px;line-height:9px;font-size:6.3px;color:#111;right:607px;text-align:right;">106244654</div>
<div class="t" style="top:278.25px;height:9px;line-height:9px;font-size:6.5px;color:#111;right:569px;text-align:right;">buy</div>
<div class="t" style="top:278.25px;height:9px;line-height:9px;font-size:6.5px;color:#111;right:506.6px;text-align:right;">1</div>
<div class="t" style="top:278.25px;height:9px;line-height:9px;font-size:6.3px;color:#111;right:444px;text-align:right;">3628.25</div>
<div class="t" style="top:278.25px;height:9px;line-height:9px;font-size:6.3px;color:#111;right:381px;text-align:right;">3626.75</div>
<div class="t" style="top:278.25px;height:9px;line-height:9px;font-size:6.39px;color:#111;left:505.4px;">2020.11.25 10:51:13</div>
<div class="t" style="top:278.25px;height:9px;line-height:9px;font-size:6.3px;color:#111;right:173.6px;text-align:right;">3626.75</div>
<div class="t" style="top:278.25px;height:9px;line-height:9px;font-size:6.5px;color:#e02020;right:78.3px;text-align:right;">-7.50</div>
<div class="t" style="top:278.25px;height:9px;line-height:9px;font-size:6.5px;color:#e02020;right:19.6px;text-align:right;">-0.04 %</div>
<div class="a" style="left:13.8px;top:288.54px;width:769.4px;height:11.71px;background:#fff;"></div>
<svg class="a" style="left:15.2px;top:289.64px;" width="7.2" height="9.6" viewBox="0 0 7 9.2"><path d="M0.5 0.5 H6.3 V6 L4.2 8.6 H0.5 Z" fill="#fde6dc" stroke="#e2602c" stroke-width="0.7" stroke-linejoin="round"/><path d="M1.8 2.4 H5 M1.8 4 H5 M1.8 5.6 H3.8" stroke="#ee8a5e" stroke-width="0.6"/><path d="M6.5 6.2 L4.4 8.8 L6.5 8.8 Z" fill="#c43c10"/></svg>
<div class="t" style="top:290.25px;height:9px;line-height:9px;font-size:6.43px;color:#111;left:27px;">2020.11.25 11:04:58</div>
<div class="t" style="top:290.25px;height:9px;line-height:9px;font-size:6.5px;color:#111;right:650.4px;text-align:right;">mesz20</div>
<div class="t" style="top:290.25px;height:9px;line-height:9px;font-size:6.3px;color:#111;right:607px;text-align:right;">106246467</div>
<div class="t" style="top:290.25px;height:9px;line-height:9px;font-size:6.5px;color:#111;right:569px;text-align:right;">sell</div>
<div class="t" style="top:290.25px;height:9px;line-height:9px;font-size:6.5px;color:#111;right:506.6px;text-align:right;">1</div>
<div class="t" style="top:290.25px;height:9px;line-height:9px;font-size:6.3px;color:#111;right:444px;text-align:right;">3627.75</div>
<div class="t" style="top:290.25px;height:9px;line-height:9px;font-size:6.3px;color:#111;right:381px;text-align:right;">3629.25</div>
<div class="t" style="top:290.25px;height:9px;line-height:9px;font-size:6.45px;color:#111;left:505.4px;">2020.11.25 11:05:41</div>
<div class="t" style="top:290.25px;height:9px;line-height:9px;font-size:6.3px;color:#111;right:173.6px;text-align:right;">3626.75</div>
<div class="t" style="top:290.25px;height:9px;line-height:9px;font-size:6.5px;color:#2222cc;right:78.3px;text-align:right;">5.00</div>
<div class="t" style="top:290.25px;height:9px;line-height:9px;font-size:6.5px;color:#2222cc;right:19.6px;text-align:right;">0.03 %</div>
<div class="a" style="left:13.8px;top:300.25px;width:769.4px;height:11.71px;background:#ebebeb;"></div>
<div class="a" style="left:358.8px;top:300.25px;width:61.4px;height:11.71px;background:#f9a0a0;"></div>
<svg class="a" style="left:15.2px;top:301.35px;" width="7.2" height="9.6" viewBox="0 0 7 9.2"><path d="M0.5 0.5 H6.3 V6 L4.2 8.6 H0.5 Z" fill="#fde6dc" stroke="#e2602c" stroke-width="0.7" stroke-linejoin="round"/><path d="M1.8 2.4 H5 M1.8 4 H5 M1.8 5.6 H3.8" stroke="#ee8a5e" stroke-width="0.6"/><path d="M6.5 6.2 L4.4 8.8 L6.5 8.8 Z" fill="#c43c10"/></svg>
<div class="t" style="top:302.25px;height:9px;line-height:9px;font-size:6.37px;color:#111;left:27px;">2020.11.25 12:04:09</div>
<div class="t" style="top:302.25px;height:9px;line-height:9px;font-size:6.5px;color:#111;right:650.4px;text-align:right;">mesz20</div>
<div class="t" style="top:302.25px;height:9px;line-height:9px;font-size:6.3px;color:#111;right:607px;text-align:right;">106252008</div>
<div class="t" style="top:302.25px;height:9px;line-height:9px;font-size:6.5px;color:#111;right:569px;text-align:right;">sell</div>
<div class="t" style="top:302.25px;height:9px;line-height:9px;font-size:6.5px;color:#111;right:506.6px;text-align:right;">1</div>
<div class="t" style="top:302.25px;height:9px;line-height:9px;font-size:6.3px;color:#111;right:444px;text-align:right;">3632.50</div>
<div class="t" style="top:302.25px;height:9px;line-height:9px;font-size:6.3px;color:#111;right:381px;text-align:right;">3634.00</div>
<div class="t" style="top:302.25px;height:9px;line-height:9px;font-size:6.39px;color:#111;left:505.4px;">2020.11.25 12:07:59</div>
<div class="t" style="top:302.25px;height:9px;line-height:9px;font-size:6.3px;color:#111;right:173.6px;text-align:right;">3634.00</div>
<div class="t" style="top:302.25px;height:9px;line-height:9px;font-size:6.5px;color:#e02020;right:78.3px;text-align:right;">-7.50</div>
<div class="t" style="top:302.25px;height:9px;line-height:9px;font-size:6.5px;color:#e02020;right:19.6px;text-align:right;">-0.04 %</div>
<div class="a" style="left:13.8px;top:311.97px;width:769.4px;height:11.71px;background:#fff;"></div>
<div class="a" style="left:358.8px;top:311.97px;width:61.4px;height:11.71px;background:#f9a0a0;"></div>
<svg class="a" style="left:15.2px;top:313.07px;" width="7.2" height="9.6" viewBox="0 0 7 9.2"><path d="M0.5 0.5 H6.3 V6 L4.2 8.6 H0.5 Z" fill="#eef6fe" stroke="#4593df" stroke-width="0.7" stroke-linejoin="round"/><path d="M1.8 2.4 H5 M1.8 4 H5 M1.8 5.6 H3.8" stroke="#6aaae6" stroke-width="0.6"/><path d="M6.5 6.2 L4.4 8.8 L6.5 8.8 Z" fill="#1f5fb4"/></svg>
<div class="t" style="top:313.25px;height:9px;line-height:9px;font-size:6.37px;color:#111;left:27px;">2020.11.26 15:33:46</div>
<div class="t" style="top:313.25px;height:9px;line-height:9px;font-size:6.5px;color:#111;right:650.4px;text-align:right;">mesz20</div>
<div class="t" style="top:313.25px;height:9px;line-height:9px;font-size:6.3px;color:#111;right:607px;text-align:right;">106471721</div>
<div class="t" style="top:313.25px;height:9px;line-height:9px;font-size:6.5px;color:#111;right:569px;text-align:right;">buy</div>
<div class="t" style="top:313.25px;height:9px;line-height:9px;font-size:6.5px;color:#111;right:506.6px;text-align:right;">1</div>
<div class="t" style="top:313.25px;height:9px;line-height:9px;font-size:6.3px;color:#111;right:444px;text-align:right;">3627.50</div>
<div class="t" style="top:313.25px;height:9px;line-height:9px;font-size:6.3px;color:#111;right:381px;text-align:right;">3625.75</div>
<div class="t" style="top:313.25px;height:9px;line-height:9px;font-size:6.39px;color:#111;left:505.4px;">2020.11.26 15:54:52</div>
<div class="t" style="top:313.25px;height:9px;line-height:9px;font-size:6.3px;color:#111;right:173.6px;text-align:right;">3625.00</div>
<div class="t" style="top:313.25px;height:9px;line-height:9px;font-size:6.5px;color:#e02020;right:78.3px;text-align:right;">-12.50</div>
<div class="t" style="top:313.25px;height:9px;line-height:9px;font-size:6.5px;color:#e02020;right:19.6px;text-align:right;">-0.07 %</div>
<div class="a" style="left:13.8px;top:323.68px;width:769.4px;height:11.71px;background:#ebebeb;"></div>
<svg class="a" style="left:15.2px;top:324.78px;" width="7.2" height="9.6" viewBox="0 0 7 9.2"><path d="M0.5 0.5 H6.3 V6 L4.2 8.6 H0.5 Z" fill="#eef6fe" stroke="#4593df" stroke-width="0.7" stroke-linejoin="round"/><path d="M1.8 2.4 H5 M1.8 4 H5 M1.8 5.6 H3.8" stroke="#6aaae6" stroke-width="0.6"/><path d="M6.5 6.2 L4.4 8.8 L6.5 8.8 Z" fill="#1f5fb4"/></svg>
<div class="t" style="top:325.25px;height:9px;line-height:9px;font-size:6.37px;color:#111;left:27px;">2020.11.26 16:48:19</div>
<div class="t" style="top:325.25px;height:9px;line-height:9px;font-size:6.5px;color:#111;right:650.4px;text-align:right;">mesz20</div>
<div class="t" style="top:325.25px;height:9px;line-height:9px;font-size:6.3px;color:#111;right:607px;text-align:right;">106482673</div>
<div class="t" style="top:325.25px;height:9px;line-height:9px;font-size:6.5px;color:#111;right:569px;text-align:right;">buy</div>
<div class="t" style="top:325.25px;height:9px;line-height:9px;font-size:6.5px;color:#111;right:506.6px;text-align:right;">1</div>
<div class="t" style="top:325.25px;height:9px;line-height:9px;font-size:6.3px;color:#111;right:444px;text-align:right;">3624.50</div>
<div class="t" style="top:325.25px;height:9px;line-height:9px;font-size:6.3px;color:#111;right:381px;text-align:right;">3622.75</div>
<div class="t" style="top:325.25px;height:9px;line-height:9px;font-size:6.39px;color:#111;left:505.4px;">2020.11.26 16:50:08</div>
<div class="t" style="top:325.25px;height:9px;line-height:9px;font-size:6.3px;color:#111;right:173.6px;text-align:right;">3626.00</div>
<div class="t" style="top:325.25px;height:9px;line-height:9px;font-size:6.5px;color:#2222cc;right:78.3px;text-align:right;">7.50</div>
<div class="t" style="top:325.25px;height:9px;line-height:9px;font-size:6.5px;color:#2222cc;right:19.6px;text-align:right;">0.04 %</div>
<div class="a" style="left:13.8px;top:335.4px;width:769.4px;height:11.71px;background:#fff;"></div>
<svg class="a" style="left:15.2px;top:336.5px;" width="7.2" height="9.6" viewBox="0 0 7 9.2"><path d="M0.5 0.5 H6.3 V6 L4.2 8.6 H0.5 Z" fill="#fde6dc" stroke="#e2602c" stroke-width="0.7" stroke-linejoin="round"/><path d="M1.8 2.4 H5 M1.8 4 H5 M1.8 5.6 H3.8" stroke="#ee8a5e" stroke-width="0.6"/><path d="M6.5 6.2 L4.4 8.8 L6.5 8.8 Z" fill="#c43c10"/></svg>
<div class="t" style="top:337.25px;height:9px;line-height:9px;font-size:6.37px;color:#111;left:27px;">2020.11.27 16:02:45</div>
<div class="t" style="top:337.25px;height:9px;line-height:9px;font-size:6.5px;color:#111;right:650.4px;text-align:right;">mesz20</div>
<div class="t" style="top:337.25px;height:9px;line-height:9px;font-size:6.3px;color:#111;right:607px;text-align:right;">106661676</div>
<div class="t" style="top:337.25px;height:9px;line-height:9px;font-size:6.5px;color:#111;right:569px;text-align:right;">sell</div>
<div class="t" style="top:337.25px;height:9px;line-height:9px;font-size:6.5px;color:#111;right:506.6px;text-align:right;">1</div>
<div class="t" style="top:337.25px;height:9px;line-height:9px;font-size:6.3px;color:#111;right:444px;text-align:right;">3642.00</div>
<div class="t" style="top:337.25px;height:9px;line-height:9px;font-size:6.3px;color:#111;right:381px;text-align:right;">3643.75</div>
<div class="t" style="top:337.25px;height:9px;line-height:9px;font-size:6.45px;color:#111;left:505.4px;">2020.11.27 16:03:11</div>
<div class="t" style="top:337.25px;height:9px;line-height:9px;font-size:6.3px;color:#111;right:173.6px;text-align:right;">3640.75</div>
<div class="t" style="top:337.25px;height:9px;line-height:9px;font-size:6.5px;color:#2222cc;right:78.3px;text-align:right;">6.25</div>
<div class="t" style="top:337.25px;height:9px;line-height:9px;font-size:6.5px;color:#2222cc;right:19.6px;text-align:right;">0.03 %</div>
<div class="a" style="left:13.8px;top:347.11px;width:769.4px;height:11.71px;background:#ebebeb;"></div>
<div class="a" style="left:358.8px;top:347.11px;width:61.4px;height:11.71px;background:#f9a0a0;"></div>
<svg class="a" style="left:15.2px;top:348.21px;" width="7.2" height="9.6" viewBox="0 0 7 9.2"><path d="M0.5 0.5 H6.3 V6 L4.2 8.6 H0.5 Z" fill="#eef6fe" stroke="#4593df" stroke-width="0.7" stroke-linejoin="round"/><path d="M1.8 2.4 H5 M1.8 4 H5 M1.8 5.6 H3.8" stroke="#6aaae6" stroke-width="0.6"/><path d="M6.5 6.2 L4.4 8.8 L6.5 8.8 Z" fill="#1f5fb4"/></svg>
<div class="t" style="top:349.25px;height:9px;line-height:9px;font-size:6.37px;color:#111;left:27px;">2020.11.27 16:13:04</div>
<div class="t" style="top:349.25px;height:9px;line-height:9px;font-size:6.5px;color:#111;right:650.4px;text-align:right;">mesz20</div>
<div class="t" style="top:349.25px;height:9px;line-height:9px;font-size:6.3px;color:#111;right:607px;text-align:right;">106662958</div>
<div class="t" style="top:349.25px;height:9px;line-height:9px;font-size:6.5px;color:#111;right:569px;text-align:right;">buy</div>
<div class="t" style="top:349.25px;height:9px;line-height:9px;font-size:6.5px;color:#111;right:506.6px;text-align:right;">1</div>
<div class="t" style="top:349.25px;height:9px;line-height:9px;font-size:6.3px;color:#111;right:444px;text-align:right;">3639.50</div>
<div class="t" style="top:349.25px;height:9px;line-height:9px;font-size:6.3px;color:#111;right:381px;text-align:right;">3637.75</div>
<div class="t" style="top:349.25px;height:9px;line-height:9px;font-size:6.39px;color:#111;left:505.4px;">2020.11.27 16:16:42</div>
<div class="t" style="top:349.25px;height:9px;line-height:9px;font-size:6.3px;color:#111;right:173.6px;text-align:right;">3637.75</div>
<div class="t" style="top:349.25px;height:9px;line-height:9px;font-size:6.5px;color:#e02020;right:78.3px;text-align:right;">-8.75</div>
<div class="t" style="top:349.25px;height:9px;line-height:9px;font-size:6.5px;color:#e02020;right:19.6px;text-align:right;">-0.05 %</div>
<div class="a" style="left:13.8px;top:358.82px;width:769.4px;height:11.71px;background:#fff;"></div>
<div class="a" style="left:358.8px;top:358.82px;width:61.4px;height:11.71px;background:#f9a0a0;"></div>
<svg class="a" style="left:15.2px;top:359.92px;" width="7.2" height="9.6" viewBox="0 0 7 9.2"><path d="M0.5 0.5 H6.3 V6 L4.2 8.6 H0.5 Z" fill="#fde6dc" stroke="#e2602c" stroke-width="0.7" stroke-linejoin="round"/><path d="M1.8 2.4 H5 M1.8 4 H5 M1.8 5.6 H3.8" stroke="#ee8a5e" stroke-width="0.6"/><path d="M6.5 6.2 L4.4 8.8 L6.5 8.8 Z" fill="#c43c10"/></svg>
<div class="t" style="top:360.25px;height:9px;line-height:9px;font-size:6.37px;color:#111;left:27px;">2020.11.27 17:49:09</div>
<div class="t" style="top:360.25px;height:9px;line-height:9px;font-size:6.5px;color:#111;right:650.4px;text-align:right;">mesz20</div>
<div class="t" style="top:360.25px;height:9px;line-height:9px;font-size:6.3px;color:#111;right:607px;text-align:right;">106677695</div>
<div class="t" style="top:360.25px;height:9px;line-height:9px;font-size:6.5px;color:#111;right:569px;text-align:right;">sell</div>
<div class="t" style="top:360.25px;height:9px;line-height:9px;font-size:6.5px;color:#111;right:506.6px;text-align:right;">1</div>
<div class="t" style="top:360.25px;height:9px;line-height:9px;font-size:6.3px;color:#111;right:444px;text-align:right;">3633.00</div>
<div class="t" style="top:360.25px;height:9px;line-height:9px;font-size:6.3px;color:#111;right:381px;text-align:right;">3634.75</div>
<div class="t" style="top:360.25px;height:9px;line-height:9px;font-size:6.39px;color:#111;left:505.4px;">2020.11.27 17:51:28</div>
<div class="t" style="top:360.25px;height:9px;line-height:9px;font-size:6.3px;color:#111;right:173.6px;text-align:right;">3634.75</div>
<div class="t" style="top:360.25px;height:9px;line-height:9px;font-size:6.5px;color:#e02020;right:78.3px;text-align:right;">-8.75</div>
<div class="t" style="top:360.25px;height:9px;line-height:9px;font-size:6.5px;color:#e02020;right:19.6px;text-align:right;">-0.05 %</div>
<div class="a" style="left:13.8px;top:370.54px;width:769.4px;height:11.71px;background:#ebebeb;"></div>
<svg class="a" style="left:15.2px;top:371.64px;" width="7.2" height="9.6" viewBox="0 0 7 9.2"><path d="M0.5 0.5 H6.3 V6 L4.2 8.6 H0.5 Z" fill="#eef6fe" stroke="#4593df" stroke-width="0.7" stroke-linejoin="round"/><path d="M1.8 2.4 H5 M1.8 4 H5 M1.8 5.6 H3.8" stroke="#6aaae6" stroke-width="0.6"/><path d="M6.5 6.2 L4.4 8.8 L6.5 8.8 Z" fill="#1f5fb4"/></svg>
<div class="t" style="top:372.25px;height:9px;line-height:9px;font-size:6.37px;color:#111;left:27px;">2020.11.27 18:05:20</div>
<div class="t" style="top:372.25px;height:9px;line-height:9px;font-size:6.5px;color:#111;right:650.4px;text-align:right;">mesz20</div>
<div class="t" style="top:372.25px;height:9px;line-height:9px;font-size:6.3px;color:#111;right:607px;text-align:right;">106679836</div>
<div class="t" style="top:372.25px;height:9px;line-height:9px;font-size:6.5px;color:#111;right:569px;text-align:right;">buy</div>
<div class="t" style="top:372.25px;height:9px;line-height:9px;font-size:6.5px;color:#111;right:506.6px;text-align:right;">1</div>
<div class="t" style="top:372.25px;height:9px;line-height:9px;font-size:6.3px;color:#111;right:444px;text-align:right;">3634.75</div>
<div class="t" style="top:372.25px;height:9px;line-height:9px;font-size:6.3px;color:#111;right:381px;text-align:right;">3633.00</div>
<div class="t" style="top:372.25px;height:9px;line-height:9px;font-size:6.39px;color:#111;left:505.4px;">2020.11.27 18:05:32</div>
<div class="t" style="top:372.25px;height:9px;line-height:9px;font-size:6.3px;color:#111;right:173.6px;text-align:right;">3636.00</div>
<div class="t" style="top:372.25px;height:9px;line-height:9px;font-size:6.5px;color:#2222cc;right:78.3px;text-align:right;">6.25</div>
<div class="t" style="top:372.25px;height:9px;line-height:9px;font-size:6.5px;color:#2222cc;right:19.6px;text-align:right;">0.03 %</div>
<div class="a" style="left:95px;top:157px;width:0.8px;height:14.4px;background:#e4e4e4;"></div>
<div class="a" style="left:95px;top:183.11px;width:0.8px;height:199.14px;background:rgba(120,120,120,0.16);"></div>
<div class="a" style="left:95px;top:171.4px;width:0.8px;height:11.71px;background:rgba(255,255,255,0.35);"></div>
<div class="a" style="left:151px;top:157px;width:0.8px;height:14.4px;background:#e4e4e4;"></div>
<div class="a" style="left:151px;top:183.11px;width:0.8px;height:199.14px;background:rgba(120,120,120,0.16);"></div>
<div class="a" style="left:151px;top:171.4px;width:0.8px;height:11.71px;background:rgba(255,255,255,0.35);"></div>
<div class="a" style="left:194.6px;top:157px;width:0.8px;height:14.4px;background:#e4e4e4;"></div>
<div class="a" style="left:194.6px;top:183.11px;width:0.8px;height:199.14px;background:rgba(120,120,120,0.16);"></div>
<div class="a" style="left:194.6px;top:171.4px;width:0.8px;height:11.71px;background:rgba(255,255,255,0.35);"></div>
<div class="a" style="left:232.6px;top:157px;width:0.8px;height:14.4px;background:#e4e4e4;"></div>
<div class="a" style="left:232.6px;top:183.11px;width:0.8px;height:199.14px;background:rgba(120,120,120,0.16);"></div>
<div class="a" style="left:232.6px;top:171.4px;width:0.8px;height:11.71px;background:rgba(255,255,255,0.35);"></div>
<div class="a" style="left:294.6px;top:157px;width:0.8px;height:14.4px;background:#e4e4e4;"></div>
<div class="a" style="left:294.6px;top:183.11px;width:0.8px;height:199.14px;background:rgba(120,120,120,0.16);"></div>
<div class="a" style="left:294.6px;top:171.4px;width:0.8px;height:11.71px;background:rgba(255,255,255,0.35);"></div>
<div class="a" style="left:358px;top:157px;width:0.8px;height:14.4px;background:#e4e4e4;"></div>
<div class="a" style="left:358px;top:183.11px;width:0.8px;height:199.14px;background:rgba(120,120,120,0.16);"></div>
<div class="a" style="left:358px;top:171.4px;width:0.8px;height:11.71px;background:rgba(255,255,255,0.35);"></div>
<div class="a" style="left:420px;top:157px;width:0.8px;height:14.4px;background:#e4e4e4;"></div>
<div class="a" style="left:420px;top:183.11px;width:0.8px;height:199.14px;background:rgba(120,120,120,0.16);"></div>
<div class="a" style="left:420px;top:171.4px;width:0.8px;height:11.71px;background:rgba(255,255,255,0.35);"></div>
<div class="a" style="left:482.6px;top:157px;width:0.8px;height:14.4px;background:#e4e4e4;"></div>
<div class="a" style="left:482.6px;top:183.11px;width:0.8px;height:199.14px;background:rgba(120,120,120,0.16);"></div>
<div class="a" style="left:482.6px;top:171.4px;width:0.8px;height:11.71px;background:rgba(255,255,255,0.35);"></div>
<div class="a" style="left:565px;top:157px;width:0.8px;height:14.4px;background:#e4e4e4;"></div>
<div class="a" style="left:565px;top:183.11px;width:0.8px;height:199.14px;background:rgba(120,120,120,0.16);"></div>
<div class="a" style="left:565px;top:171.4px;width:0.8px;height:11.71px;background:rgba(255,255,255,0.35);"></div>
<div class="a" style="left:628.2px;top:157px;width:0.8px;height:14.4px;background:#e4e4e4;"></div>
<div class="a" style="left:628.2px;top:183.11px;width:0.8px;height:199.14px;background:rgba(120,120,120,0.16);"></div>
<div class="a" style="left:628.2px;top:171.4px;width:0.8px;height:11.71px;background:rgba(255,255,255,0.35);"></div>
<div class="a" style="left:724.1px;top:157px;width:0.8px;height:14.4px;background:#e4e4e4;"></div>
<div class="a" style="left:724.1px;top:183.11px;width:0.8px;height:199.14px;background:rgba(120,120,120,0.16);"></div>
<div class="a" style="left:724.1px;top:171.4px;width:0.8px;height:11.71px;background:rgba(255,255,255,0.35);"></div>
<div class="a" style="left:782.8px;top:157px;width:0.8px;height:14.4px;background:#e4e4e4;"></div>
<div class="t" style="top:161.25px;height:9px;line-height:9px;font-size:6.68px;color:#1a1a1a;left:17.5px;">Время</div>
<div class="t" style="top:160.25px;height:11px;line-height:11px;font-size:7.21px;color:#1a1a1a;left:122.4px;">Символ</div>
<div class="t" style="top:161.25px;height:9px;line-height:9px;font-size:6.65px;color:#1a1a1a;left:175px;">Тикет</div>
<div class="t" style="top:161.25px;height:9px;line-height:9px;font-size:6.48px;color:#1a1a1a;left:218.6px;">Тип</div>
<div class="t" style="top:161.25px;height:9px;line-height:9px;font-size:7.03px;color:#1a1a1a;left:270px;">Объем</div>
<div class="t" style="top:161.25px;height:9px;line-height:9px;font-size:6.65px;color:#1a1a1a;left:339px;">Цена</div>
<div class="t" style="top:161.25px;height:9px;line-height:9px;font-size:6.42px;color:#1a1a1a;left:404.4px;">S / L</div>
<div class="t" style="top:161.25px;height:9px;line-height:9px;font-size:6.4px;color:#1a1a1a;left:466.6px;">T / P</div>
<div class="t" style="top:161.25px;height:9px;line-height:9px;font-size:6.65px;color:#1a1a1a;left:528px;">Время</div>
<svg class="a" style="left:556.4px;top:163.4px;" width="4.6" height="2.8" viewBox="0 0 4.6 2.8"><path d="M0 2.8 L2.3 0 L4.6 2.8 Z" fill="#222"/></svg>
<div class="t" style="top:161.25px;height:9px;line-height:9px;font-size:6.65px;color:#1a1a1a;left:609px;">Цена</div>
<div class="t" style="top:161.25px;height:10px;line-height:10px;font-size:7.09px;color:#1a1a1a;left:690.8px;">Прибыль</div>
<div class="t" style="top:161.25px;height:9px;line-height:9px;font-size:6.85px;color:#1a1a1a;left:743.7px;">Изменение</div>
<div class="a" style="left:783.6px;top:157px;width:9px;height:235px;background:#f0f0f0;"></div>
<div class="a" style="left:784px;top:231px;width:8.2px;height:142.2px;background:#cdcdcd;"></div>
<svg class="a" style="left:785.6px;top:162.2px;" width="5" height="3.4" viewBox="0 0 5 3.4"><path d="M0.4 3 L2.5 0.6 L4.6 3" stroke="#444" stroke-width="0.9" fill="none"/></svg>
<svg class="a" style="left:785.6px;top:385.6px;" width="5" height="3.4" viewBox="0 0 5 3.4"><path d="M0.4 0.4 L2.5 2.8 L4.6 0.4" stroke="#444" stroke-width="0.9" fill="none"/></svg>
<div class="a" style="left:792.6px;top:155.2px;width:2.8px;height:264.8px;background:#f4f4f4;"></div>
<div class="a" style="left:13.8px;top:382.25px;width:769.4px;height:9.35px;background:#d2d2d2;"></div>
<div class="a" style="left:13.8px;top:391.2px;width:778.8px;height:0.9px;background:#555;"></div>
<svg class="a" style="left:15px;top:383.4px;" width="7.6" height="7.6" viewBox="0 0 7.6 7.6"><circle cx="3.8" cy="3.8" r="3.2" fill="none" stroke="#1a1a1a" stroke-width="0.9"/><path d="M2 3.8 H5.6" stroke="#1a1a1a" stroke-width="0.9"/></svg>
<div class="t" style="top:383.25px;height:9px;line-height:9px;font-size:6.93px;color:#111;font-weight:bold;left:26.8px;">Прибыль: -61.46</div>
<div class="t" style="top:383.25px;height:9px;line-height:9px;font-size:6.85px;color:#111;font-weight:bold;left:87px;">Кредит: 0.00</div>
<div class="t" style="top:383.25px;height:9px;line-height:9px;font-size:6.89px;color:#111;font-weight:bold;left:133.2px;">Депозит: 3 000.00</div>
<div class="t" style="top:383.25px;height:9px;line-height:9px;font-size:6.72px;color:#111;font-weight:bold;left:196.8px;">Снятие: 0.00</div>
<div class="t" style="top:383.25px;height:9px;line-height:9px;font-size:6.79px;color:#111;font-weight:bold;left:242px;">Баланс: 2 938.54</div>
<div class="t" style="top:382.25px;height:11px;line-height:11px;font-size:7.19px;color:#111;font-weight:bold;left:701.4px;">-40.00</div>
<svg class="a" style="left:2.2px;top:152px;" width="2.6" height="5" viewBox="0 0 2.6 5"><path d="M2.3 0.5 Q0.5 0.7 0.5 2.5 Q0.5 4.4 2.3 4.5" fill="none" stroke="#173f66" stroke-width="1"/></svg>
<svg class="a" style="left:2.3px;top:209.6px;" width="2.6" height="5" viewBox="0 0 2.6 5"><path d="M2.3 0.5 Q0.5 0.7 0.5 2.5 Q0.5 4.4 2.3 4.5" fill="none" stroke="#173f66" stroke-width="1"/></svg>
<svg class="a" style="left:2.2px;top:383px;" width="2.6" height="5" viewBox="0 0 2.6 5"><path d="M2.3 0.5 Q0.5 0.7 0.5 2.5 Q0.5 4.4 2.3 4.5" fill="none" stroke="#173f66" stroke-width="1"/></svg>
<div class="a" style="left:13.6px;top:392px;width:781.8px;height:14.6px;background:#f0f0f0;"></div>
<div class="a" style="left:5px;top:406.2px;width:790.4px;height:0.8px;background:#dcdcdc;"></div>
<div class="t" style="top:394.25px;height:10px;line-height:10px;font-size:7.18px;color:#808890;left:21.3px;">Торговля</div>
<div class="t" style="top:394.25px;height:9px;line-height:9px;font-size:7.04px;color:#808890;left:62.5px;">Активы</div>
<div class="t" style="top:394.25px;height:9px;line-height:9px;font-size:6.92px;color:#808890;left:138.2px;">Новости</div>
<div class="t" style="top:394.25px;height:9px;line-height:9px;font-size:6.95px;color:#808890;left:177px;">Почта</div>
<div class="t" style="top:394.25px;height:9px;line-height:9px;font-size:6.7px;color:#808890;left:212.5px;">Календарь</div>
<div class="t" style="top:394.25px;height:10px;line-height:10px;font-size:7.12px;color:#808890;left:258.7px;">Компания</div>
<div class="t" style="top:394.25px;height:9px;line-height:9px;font-size:6.94px;color:#808890;left:303.3px;">Маркет</div>
<div class="t" style="top:394.25px;height:9px;line-height:9px;font-size:6.99px;color:#808890;left:338.7px;">Алерты</div>
<div class="t" style="top:394.25px;height:9px;line-height:9px;font-size:6.9px;color:#808890;left:375px;">Сигналы</div>
<div class="t" style="top:394.25px;height:9px;line-height:9px;font-size:6.57px;color:#808890;left:415.5px;">Статьи</div>
<div class="t" style="top:394.25px;height:9px;line-height:9px;font-size:6.9px;color:#808890;left:453px;">Библиотека</div>
<div class="t" style="top:394.25px;height:9px;line-height:9px;font-size:6.7px;color:#808890;left:502.5px;letter-spacing:-0.54px;">VPS</div>
<div class="t" style="top:394.25px;height:9px;line-height:9px;font-size:6.88px;color:#808890;left:526.2px;">Эксперты</div>
<div class="t" style="top:394.25px;height:9px;line-height:9px;font-size:6.99px;color:#808890;left:568.8px;">Журнал</div>
<div class="a" style="left:56.65px;top:394.4px;width:0.7px;height:8.2px;background:#a8a8a8;"></div>
<div class="a" style="left:170.95px;top:394.4px;width:0.7px;height:8.2px;background:#a8a8a8;"></div>
<div class="a" style="left:205.95px;top:394.4px;width:0.7px;height:8.2px;background:#a8a8a8;"></div>
<div class="a" style="left:252.15px;top:394.4px;width:0.7px;height:8.2px;background:#a8a8a8;"></div>
<div class="a" style="left:297.15px;top:394.4px;width:0.7px;height:8.2px;background:#a8a8a8;"></div>
<div class="a" style="left:332.15px;top:394.4px;width:0.7px;height:8.2px;background:#a8a8a8;"></div>
<div class="a" style="left:369.15px;top:394.4px;width:0.7px;height:8.2px;background:#a8a8a8;"></div>
<div class="a" style="left:409.65px;top:394.4px;width:0.7px;height:8.2px;background:#a8a8a8;"></div>
<div class="a" style="left:447.15px;top:394.4px;width:0.7px;height:8.2px;background:#a8a8a8;"></div>
<div class="a" style="left:496.45px;top:394.4px;width:0.7px;height:8.2px;background:#a8a8a8;"></div>
<div class="a" style="left:520.15px;top:394.4px;width:0.7px;height:8.2px;background:#a8a8a8;"></div>
<div class="a" style="left:562.95px;top:394.4px;width:0.7px;height:8.2px;background:#a8a8a8;"></div>
<div class="a" style="left:92.5px;top:391px;width:38.8px;height:13.4px;background:#fff;border:0.8px solid #333;border-top:none;box-sizing:border-box;border-radius:0 0 1.5px 1.5px;"></div>
<div class="t" style="top:394.25px;height:9px;line-height:9px;font-size:7.07px;color:#111;left:98.8px;">История</div>
<div class="t" style="top:397.25px;height:8px;line-height:8px;font-size:5.6px;color:#e02020;left:197.2px;">5</div>
<div class="t" style="top:397.25px;height:8px;line-height:8px;font-size:5.6px;color:#e02020;font-weight:bold;left:438.4px;">1</div>
<div class="t" style="top:394.25px;height:9px;line-height:9px;font-size:6.77px;color:#111;left:730px;">Тестер стратегий</div>
<div class="a" style="left:5px;top:407px;width:790.4px;height:13.3px;background:#f0f0f0;"></div>
<div class="t" style="top:411.25px;height:9px;line-height:9px;font-size:6.68px;color:#111;left:6.4px;">Вкладки</div>
<div class="t" style="top:410.25px;height:11px;line-height:11px;font-size:7.26px;color:#111;left:392.5px;">Default</div>
<div class="a" style="left:388.95px;top:408.4px;width:0.7px;height:10.6px;background:#c4c4c4;"></div>
<div class="a" style="left:463.95px;top:408.4px;width:0.7px;height:10.6px;background:#c4c4c4;"></div>
<div class="a" style="left:522.15px;top:408.4px;width:0.7px;height:10.6px;background:#c4c4c4;"></div>
<div class="a" style="left:563.45px;top:408.4px;width:0.7px;height:10.6px;background:#c4c4c4;"></div>
<div class="a" style="left:604.65px;top:408.4px;width:0.7px;height:10.6px;background:#c4c4c4;"></div>
<div class="a" style="left:644.65px;top:408.4px;width:0.7px;height:10.6px;background:#c4c4c4;"></div>
<div class="a" style="left:685.95px;top:408.4px;width:0.7px;height:10.6px;background:#c4c4c4;"></div>
<div class="a" style="left:723.95px;top:408.4px;width:0.7px;height:10.6px;background:#c4c4c4;"></div>
<svg class="a" style="left:728px;top:409.8px;" width="9.4" height="9.6" viewBox="0 0 9.4 9.6"><rect x="0.5" y="0.5" width="5" height="8" rx="0.8" fill="#6fb0e8" stroke="#2f78c4" stroke-width="0.7"/><path d="M1.6 2.4 H4.4 M1.6 4 H4.4" stroke="#fff" stroke-width="0.6"/><circle cx="6.4" cy="6.8" r="2.6" fill="#4cb84c" stroke="#2a8a2a" stroke-width="0.4"/><path d="M5.2 6.8 H7.6 M6.4 5.6 V8" stroke="#fff" stroke-width="0.7"/></svg>
<div class="t" style="top:411.25px;height:9px;line-height:9px;font-size:6.49px;color:#111;left:740px;">2051 / 9 Kb</div>
<svg class="a" style="left:788px;top:413px;" width="6" height="6" viewBox="0 0 6 6"><path d="M5 1 v0.1 M5 3 v0.1 M3 3 v0.1 M5 5 v0.1 M3 5 v0.1 M1 5 v0.1" stroke="#b0b0b0" stroke-width="1" stroke-linecap="square"/></svg>
<div class="a" style="left:0px;top:426px;width:800px;height:23px;background:linear-gradient(90deg,#22363e 0%,#22363e 35%,#1f3040 62%,#1c2a44 100%);"></div>
<div class="a" style="left:0px;top:424.8px;width:800px;height:1.2px;background:linear-gradient(180deg,rgba(0,30,70,0),rgba(0,30,70,0.45));"></div>
<div class="a" style="left:28.1px;top:426px;width:201.3px;height:23px;background:#f3f3f3;"></div>
<svg class="a" style="left:8.8px;top:432.4px;" width="10.4" height="9.6" viewBox="0 0 10.4 9.6"><path d="M0 1.3 L4.4 0.7 V4.5 H0 Z M5 0.6 L10.4 0 V4.5 H5 Z M0 5.1 H4.4 V8.9 L0 8.3 Z M5 5.1 H10.4 V9.6 L5 9 Z" fill="#fff"/></svg>
<svg class="a" style="left:35px;top:432px;" width="11" height="11" viewBox="0 0 11 11"><circle cx="6.9" cy="4" r="3.2" fill="none" stroke="#333" stroke-width="0.9"/><path d="M4.6 6.4 L0.8 10" stroke="#333" stroke-width="1"/></svg>
<div class="t" style="top:432.25px;height:12px;line-height:12px;font-size:8.48px;color:#3c3c3c;left:52px;">Введите здесь текст для поиска</div>
<svg class="a" style="left:238.6px;top:432.4px;" width="10" height="10" viewBox="0 0 10 10"><circle cx="5" cy="5" r="3.8" fill="none" stroke="#fff" stroke-width="1.1"/></svg>
<svg class="a" style="left:266.6px;top:433px;" width="10" height="9" viewBox="0 0 10 9"><rect x="1.6" y="1.6" width="5" height="5.6" fill="none" stroke="#fff" stroke-width="0.8"/><path d="M0.2 1 V2.6 M0.2 6.2 V7.8 M8.2 1 V2.6 M8.2 6.2 V7.8 M1 0.3 H7.4 M1 8.5 H7.4" stroke="#fff" stroke-width="0.7"/><circle cx="8.6" cy="4.4" r="0.7" fill="#fff"/></svg>
<svg class="a" style="left:294.6px;top:430.7px;" width="13.6" height="13.6" viewBox="0 0 13.6 13.6"><circle cx="6.8" cy="6.8" r="6.7" fill="#f4f4f4"/><path d="M3.6 3.2 L6.8 7.4 L10 3.2 M6.8 7.4 V11.4" stroke="#e01a1a" stroke-width="1.5" fill="none"/></svg>
<svg class="a" style="left:323.4px;top:431.6px;" width="13.6" height="11.4" viewBox="0 0 13.6 11.4"><path d="M0.3 0.8 H4.6 L5.6 2 H13 V10.8 H0.3 Z" fill="#f6c948"/><rect x="0.3" y="3.4" width="12.7" height="7.4" fill="#fbd968"/><rect x="3" y="6.4" width="7.4" height="4.4" fill="#3f8fd8"/><rect x="4.8" y="8.6" width="3.8" height="2.2" fill="#fbd968"/></svg>
<svg class="a" style="left:351.6px;top:430.6px;" width="15.2" height="13.4" viewBox="0 0 15.2 13.4"><path d="M0.4 5.6 L7.6 0.4 L14.8 5.6 V13 H0.4 Z" fill="#1f6fc4"/><path d="M0.4 5.8 L7.6 10.6 L14.8 5.8 V13 H0.4 Z" fill="#3ba0ec"/><path d="M1.6 5.4 H13.6 L7.6 10 Z" fill="#f2f8fe"/></svg>
<svg class="a" style="left:381px;top:431px;" width="13.2" height="13.2" viewBox="0 0 13.2 13.2"><circle cx="6.6" cy="6.6" r="6.5" fill="#e33b2e"/><path d="M6.6 6.6 L0.9 3.4 A6.5 6.5 0 0 0 5.4 13 Z" fill="#2da94f"/><path d="M6.6 6.6 L5.4 13 A6.5 6.5 0 0 0 12.9 4.6 Z" fill="#fcc934"/><circle cx="6.6" cy="6.6" r="3" fill="#fff"/><circle cx="6.6" cy="6.6" r="2.3" fill="#4a8af4"/></svg>
<svg class="a" style="left:409.4px;top:431.4px;" width="13.8" height="12.2" viewBox="0 0 13.8 12.2"><rect x="5" y="1" width="8.4" height="10.2" fill="#f4f6fa" stroke="#2b579a" stroke-width="0.5"/><path d="M9.4 3 H12.4 M9.4 5 H12.4 M9.4 7 H12.4 M9.4 9 H12.4" stroke="#7a96c8" stroke-width="0.7"/><rect x="0.3" y="0.3" width="8.4" height="11.6" fill="#2b579a"/><text x="4.5" y="8.6" font-size="6.6" font-weight="bold" fill="#fff" text-anchor="middle">W</text></svg>
<svg class="a" style="left:437.4px;top:430.4px;" width="14.6" height="14.4" viewBox="0 0 14.6 14.4"><rect x="1" y="9" width="12.8" height="4.8" fill="#8a9ac8"/><path d="M1 1.4 H7 V4 H5.4 V10 H2.6 V4 H1 Z" fill="#2038e0"/><path d="M8.4 4.6 H12.8 V11 Q12.8 13.4 9.4 13.4 V11.2 Q10.4 11.2 10.4 10 V7 H8.4 Z" fill="#2846e8"/><circle cx="11.4" cy="2.2" r="1.4" fill="#7a5ce0"/><rect x="2" y="10.6" width="5" height="2.6" fill="#5a68a8"/></svg>
<svg class="a" style="left:466.6px;top:431.4px;" width="13.8" height="12.2" viewBox="0 0 13.8 12.2"><rect x="6" y="1" width="7.4" height="10.2" fill="#e8f2ea" stroke="#217346" stroke-width="0.6"/><path d="M9.8 1 V11.2" stroke="#217346" stroke-width="0.6"/><rect x="0.3" y="0.3" width="8.6" height="11.6" fill="#217346"/><text x="4.6" y="8.6" font-size="6.8" font-weight="bold" fill="#fff" text-anchor="middle">X</text></svg>
<svg class="a" style="left:494.6px;top:430.2px;" width="14" height="14" viewBox="0 0 14 14"><path d="M6.4 3.4 Q1 3.4 0.6 8 Q0.6 12.6 5.6 12.8 Q7.8 12.8 7.2 11 Q6.8 9.4 8.8 9.4 Q11.8 9.6 11.6 7 Q11 3.4 6.4 3.4 Z" fill="#e6e6ea" stroke="#a8a8b0" stroke-width="0.4"/><circle cx="3.2" cy="7" r="1.1" fill="#e04040"/><circle cx="5.8" cy="5.4" r="1.1" fill="#40a0e0"/><circle cx="3.6" cy="10" r="1.1" fill="#40b860"/><circle cx="8.8" cy="6.4" r="1" fill="#e0c040"/><path d="M8.2 10.4 L12 1.6 L13 2 L9.6 10.8 Z" fill="#d88a40"/><path d="M12 1.6 L12.6 0.2 L13.4 0.6 L13 2 Z" fill="#e0a040"/></svg>
<svg class="a" style="left:524.2px;top:430.8px;" width="13.6" height="13.6" viewBox="0 0 13.6 13.6"><circle cx="6.8" cy="6.8" r="6.6" fill="#1b7fd6"/><path d="M0.3 7.6 Q0.6 1 7 0.3 Q12.6 0.6 13.3 5.8 Q13.2 8.6 9.8 8.6 H6 Q6.4 6 8.6 5.6 Q5 3.4 2 6 Q0.6 7 0.3 7.6 Z" fill="#35c1b0"/><path d="M6.4 0.3 Q11.8 0.2 13.3 5.4 Q13.4 7.6 11 8.4 Q12 4 6.4 0.3 Z" fill="#5fd868"/><circle cx="6.2" cy="8.2" r="2.3" fill="#1e303a"/><path d="M4 9 Q5 12.6 9.6 11.6 Q7 14 3.6 12.4 Q1.6 10.4 4 9 Z" fill="#0f5fb4"/></svg>
<div class="a" style="left:545.7px;top:426px;width:28.1px;height:23px;background:#475868;"></div>
<div class="a" style="left:545.7px;top:447.2px;width:28.1px;height:1.8px;background:#8cc4ec;"></div>
<svg class="a" style="left:553px;top:430.6px;" width="13.6" height="13.4" viewBox="0 0 13.6 13.4"><rect x="0.4" y="0.6" width="12.8" height="9.6" fill="#dfe8f0" stroke="#9ab0c4" stroke-width="0.5"/><rect x="0.4" y="0.6" width="12.8" height="1.6" fill="#b8c8d8"/><circle cx="12.4" cy="1.3" r="0.6" fill="#e03030"/><path d="M1.6 8.6 L4 5 L6 6.8 L8.6 3.4" stroke="#7a9ab8" stroke-width="0.7" fill="none"/><circle cx="7.6" cy="8" r="3.6" fill="#58b058"/><path d="M5 8.6 Q7.6 4 10.4 8.6" stroke="#f0d040" stroke-width="1.1" fill="none"/><circle cx="10.6" cy="11" r="2.2" fill="#3a8ad8"/><circle cx="5" cy="11.2" r="1.8" fill="#e8c838"/></svg>
<div class="a" style="left:577px;top:447.2px;width:22.7px;height:1.8px;background:#8cc4ec;"></div>
<svg class="a" style="left:581.5px;top:430.2px;" width="14" height="14" viewBox="0 0 14 14"><circle cx="7" cy="7" r="6.3" fill="#0a0a0a" stroke="#f4f4f4" stroke-width="1.2"/><circle cx="7" cy="7" r="3.4" fill="#ee1c24"/></svg>
<svg class="a" style="left:656.4px;top:434.4px;" width="7" height="4.4" viewBox="0 0 7 4.4"><path d="M0.5 4 L3.5 0.8 L6.5 4" stroke="#fff" stroke-width="1" fill="none"/></svg>
<svg class="a" style="left:670.4px;top:433.6px;" width="9" height="6.4" viewBox="0 0 9 6.4"><rect x="1.6" y="0.8" width="7" height="4.6" fill="#e8e8e8"/><rect x="0.4" y="2" width="1.2" height="2.2" fill="#e8e8e8"/><path d="M0 0.6 L2.4 1.8" stroke="#e8e8e8" stroke-width="0.6"/></svg>
<svg class="a" style="left:685.6px;top:432.6px;" width="8" height="8.4" viewBox="0 0 8 8.4"><path d="M0.6 7.8 A7 7 0 0 1 7.6 0.8" stroke="#c8c8c8" stroke-width="0.8" fill="none"/><path d="M2.4 7.8 A5.2 5.2 0 0 1 7.6 2.6" stroke="#e0e0e0" stroke-width="0.8" fill="none"/><path d="M4.2 7.8 A3.4 3.4 0 0 1 7.6 4.4" stroke="#e8e8e8" stroke-width="0.8" fill="none"/><circle cx="6.8" cy="7" r="0.9" fill="#f0f0f0"/></svg>
<svg class="a" style="left:696.8px;top:433px;" width="10" height="8" viewBox="0 0 10 8"><path d="M0.4 2.8 H2.2 L4.4 0.6 V7.4 L2.2 5.2 H0.4 Z" fill="none" stroke="#f0f0f0" stroke-width="0.7"/><path d="M5.8 2.6 Q6.8 4 5.8 5.4 M7.2 1.6 Q8.8 4 7.2 6.4" stroke="#d0d0d0" stroke-width="0.6" fill="none"/></svg>
<div class="t" style="top:433.25px;height:9px;line-height:9px;font-size:6.3px;color:#fff;left:713.8px;letter-spacing:-0.21px;">РУС</div>
<div class="t" style="top:427.25px;height:9px;line-height:9px;font-size:6.3px;color:#fff;left:741.8px;letter-spacing:-0.12px;">14:55</div>
<div class="t" style="top:437.25px;height:9px;line-height:9px;font-size:6.43px;color:#fff;left:733.8px;">29.11.2020</div>
<svg class="a" style="left:775.6px;top:432.4px;" width="14" height="13.4" viewBox="0 0 14 13.4"><path d="M0.4 0.4 H9.4 V7.4 H3.6 L1.8 9.2 V7.4 H0.4 Z" fill="#f4f4f4"/><path d="M1.8 2.2 H8 M1.8 3.9 H8 M1.8 5.6 H5.6" stroke="#1c2a44" stroke-width="0.6"/><circle cx="9.9" cy="9.4" r="3.3" fill="#1a1a1e" stroke="#c8c8c8" stroke-width="0.6"/><text x="9.9" y="11.3" font-size="5.2" fill="#fff" text-anchor="middle">1</text></svg>
</div></div></body></html>
